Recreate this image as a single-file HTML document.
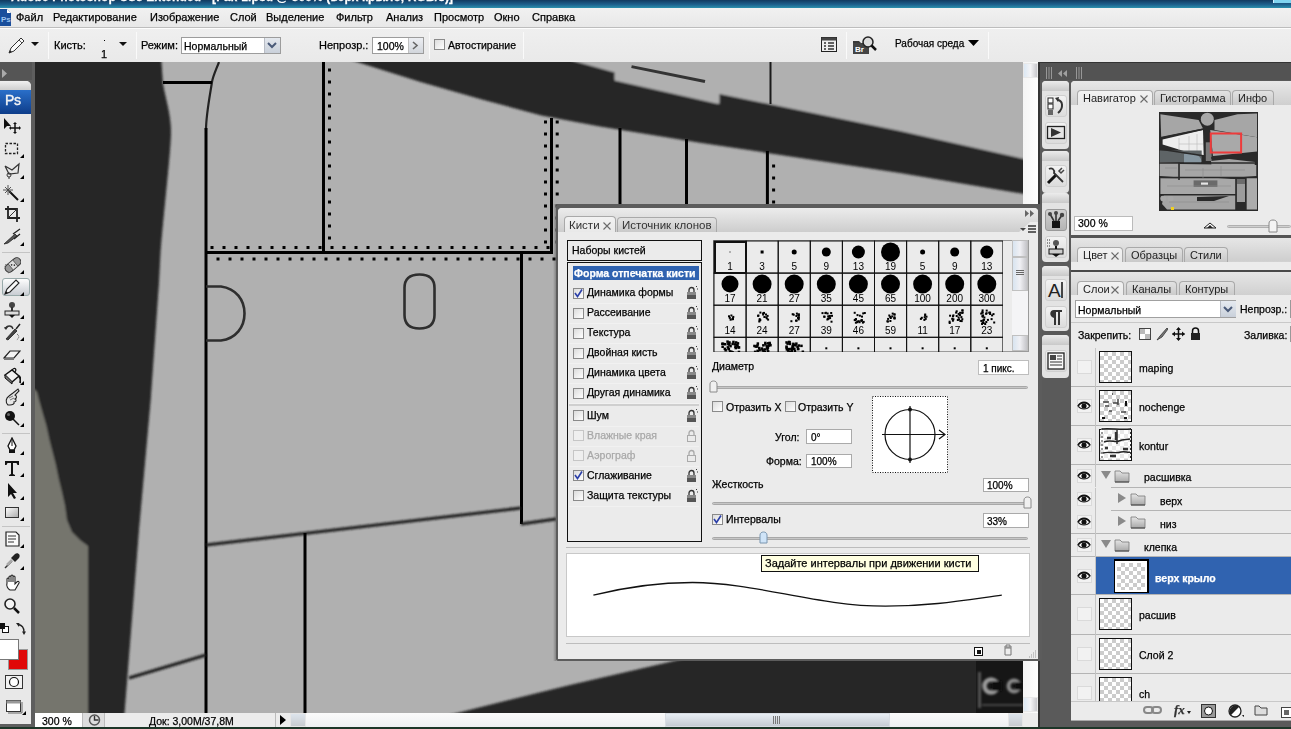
<!DOCTYPE html>
<html><head><meta charset="utf-8">
<style>
*{box-sizing:border-box;margin:0;padding:0}
html,body{width:1291px;height:729px;overflow:hidden;background:#5b5b5b;font-family:"Liberation Sans",sans-serif;font-size:11px;color:#000}
.a{position:absolute}
.t{position:absolute;white-space:nowrap;line-height:1;will-change:transform;-webkit-text-stroke:0.25px currentColor}
.cb{position:absolute;width:11px;height:11px;border:1px solid #8a8a8a;background:linear-gradient(135deg,#dcdcdc,#fff)}
.inp{position:absolute;background:#fff;border:1px solid #a8a8a8}
.tab{position:absolute;border:1px solid #a9a9a9;border-bottom:none;border-radius:4px 4px 0 0;background:linear-gradient(#e2e2e2,#c9c9c9)}
.tab.on{background:linear-gradient(#f2f2f2,#e9e9e9)}
</style></head><body>
<div class="a" style="left:0;top:0;width:1291px;height:729px;overflow:hidden">
<div class="a" style="left:0px;top:0px;width:1291px;height:8px;background:linear-gradient(#113a60,#1c5f8c 55%,#2b90ad)"></div>
<div class="t" style="left:11px;top:-9.2px;font-size:12px;font-weight:bold;color:#fff;letter-spacing:0.1px">Adobe Photoshop CS3 Extended - [Fak-1.psd @ 300% (верх крыло, RGB/8)]</div>
<div class="a" style="left:1273px;top:0px;width:18px;height:3px;background:#7fd4f0;border-left:1px solid #cfefff"></div>
<div class="a" style="left:0px;top:8px;width:1291px;height:20px;background:linear-gradient(#f1f1f1,#e8e8e8);border-bottom:1px solid #bdbdbd"></div>
<svg class="a" style="left:0px;top:9px;" width="11" height="17" viewBox="0 0 11 17"><path d="M0,0h7l4,4v13h-11z" fill="#1a4f9c"/><path d="M7,0v4h4z" fill="#fff"/><text x="1" y="13" font-size="8" font-weight="bold" fill="#9cc3f0" font-family="Liberation Sans">Ps</text></svg>
<div class="t" style="left:15.5px;top:12px;font-size:11px;">Файл</div>
<div class="t" style="left:53px;top:12px;font-size:11px;">Редактирование</div>
<div class="t" style="left:150px;top:12px;font-size:11px;">Изображение</div>
<div class="t" style="left:230px;top:12px;font-size:11px;">Слой</div>
<div class="t" style="left:266px;top:12px;font-size:11px;">Выделение</div>
<div class="t" style="left:336px;top:12px;font-size:11px;">Фильтр</div>
<div class="t" style="left:386px;top:12px;font-size:11px;">Анализ</div>
<div class="t" style="left:434px;top:12px;font-size:11px;">Просмотр</div>
<div class="t" style="left:494px;top:12px;font-size:11px;">Окно</div>
<div class="t" style="left:532px;top:12px;font-size:11px;">Справка</div>
<div class="a" style="left:0px;top:28px;width:1291px;height:34px;background:linear-gradient(#efefef,#e9e9e9);border-top:1px solid #fdfdfd"></div>
<div class="a" style="left:48px;top:32px;width:1px;height:27px;background:#929292;border-right:1px solid #fafafa"></div>
<div class="a" style="left:136px;top:32px;width:1px;height:27px;background:#929292;border-right:1px solid #fafafa"></div>
<div class="a" style="left:429px;top:32px;width:1px;height:27px;background:#929292;border-right:1px solid #fafafa"></div>
<div class="a" style="left:523px;top:32px;width:1px;height:27px;background:#929292;border-right:1px solid #fafafa"></div>
<div class="a" style="left:846px;top:32px;width:1px;height:27px;background:#929292;border-right:1px solid #fafafa"></div>
<div class="a" style="left:988px;top:32px;width:1px;height:27px;background:#929292;border-right:1px solid #fafafa"></div>
<svg class="a" style="left:7px;top:37px;" width="18" height="18" viewBox="0 0 18 18"><path d="M2,16 L4,11 L14,1 L17,4 L7,14 Z" fill="#fafafa" stroke="#333" stroke-width="1"/><path d="M2,16 L3,13 L5,15 Z" fill="#222"/><path d="M12,3 L15,6" stroke="#555"/></svg>
<svg class="a" style="left:31px;top:42px;" width="9" height="5" viewBox="0 0 9 5"><path d="M0,0h8l-4,4z" fill="#111"/></svg>
<div class="t" style="left:54px;top:40px;font-size:11px;">Кисть:</div>
<div class="a" style="left:104px;top:40px;width:1px;height:1px;background:#000"></div>
<div class="t" style="left:101px;top:49px;font-size:11px;">1</div>
<svg class="a" style="left:119px;top:42px;" width="9" height="5" viewBox="0 0 9 5"><path d="M0,0h8l-4,4z" fill="#111"/></svg>
<div class="t" style="left:141px;top:40px;font-size:11px;">Режим:</div>
<div class="inp" style="left:181px;top:37px;width:100px;height:17px;border-color:#9c9c9c"></div>
<div class="t" style="left:184px;top:41px;font-size:10.5px;">Нормальный</div>
<div class="a" style="left:264px;top:38px;width:16px;height:15px;background:linear-gradient(#e4e8ee,#c9d0da);border-left:1px solid #b8bcc4"></div>
<svg class="a" style="left:267px;top:42px;" width="10" height="7" viewBox="0 0 10 7"><path d="M1,1 L5,5 L9,1" fill="none" stroke="#4a5a78" stroke-width="2"/></svg>
<div class="t" style="left:319px;top:40px;font-size:11px;">Непрозр.:</div>
<div class="inp" style="left:372px;top:37px;width:52px;height:17px;border-color:#9c9c9c"></div>
<div class="t" style="left:377px;top:41px;font-size:10.5px;">100%</div>
<div class="a" style="left:408px;top:38px;width:15px;height:15px;background:linear-gradient(#eceef2,#d2d6dc);border-left:1px solid #c0c0c0"></div>
<svg class="a" style="left:412px;top:41px;" width="7" height="9" viewBox="0 0 7 9"><path d="M1,1 L5,4.5 L1,8" fill="none" stroke="#666" stroke-width="1.6"/></svg>
<div class="cb" style="left:434px;top:39px"></div>
<div class="t" style="left:447.5px;top:40px;font-size:10.5px;">Автостирание</div>
<svg class="a" style="left:821px;top:37px;" width="16" height="15" viewBox="0 0 16 15"><rect x="0.5" y="0.5" width="15" height="14" fill="#eee" stroke="#222"/><rect x="0.5" y="0.5" width="15" height="3" fill="#444"/><path d="M3,6h2M7,6h6M3,9h2M7,9h6M3,12h2M7,12h6" stroke="#333" stroke-width="1.3"/></svg>
<svg class="a" style="left:853px;top:36px;" width="24" height="18" viewBox="0 0 24 18"><path d="M0,5h6l2,2h8v11h-16z" fill="#3a3a3a"/><rect x="0" y="7" width="16" height="11" fill="#444"/><text x="2" y="16" font-size="8" font-weight="bold" fill="#fff" font-family="Liberation Sans">Br</text><circle cx="15" cy="6" r="5" fill="#ddd" stroke="#222" stroke-width="1.5"/><path d="M18.5,9.5 L23,14" stroke="#111" stroke-width="2.5"/></svg>
<div class="t" style="left:895px;top:39px;font-size:10px;">Рабочая среда</div>
<svg class="a" style="left:968px;top:40px;" width="11" height="7" viewBox="0 0 11 7"><path d="M0,0h11l-5.5,6z" fill="#000"/></svg>
<div class="a" style="left:0px;top:62px;width:35px;height:667px;background:#5e5e5e"></div>
<div class="a" style="left:0px;top:62px;width:32px;height:18px;background:#555"></div>
<svg class="a" style="left:2px;top:69px;" width="6" height="9" viewBox="0 0 6 9"><path d="M0,0 L5,4.5 L0,9z" fill="#aaa"/></svg>
<div class="a" style="left:0px;top:81px;width:31px;height:643px;background:#e8e8e8;border-radius:0 5px 0 0"></div>
<div class="a" style="left:0px;top:81px;width:31px;height:9px;background:linear-gradient(#f0f0f0,#cfcfcf);border-radius:0 5px 0 0"></div>
<div class="a" style="left:0px;top:90px;width:31px;height:24px;background:linear-gradient(#2a6fc9,#0e3d8a)"></div>
<div class="t" style="left:4.8px;top:93.2px;font-size:14px;color:#f4f4f4;letter-spacing:-0.3px;-webkit-text-stroke:0.4px #f4f4f4">Ps</div>
<svg class="a" style="left:3px;top:116px;" width="18" height="18" viewBox="0 0 18 18"><path d="M1,2 L1,13 L4,10 L8,10 Z" fill="#111"/><path d="M12,7v10M7,12h10" stroke="#111" stroke-width="1.5"/><path d="M12,6l-2,2h4zM12,18l-2,-2h4zM6,12l2,-2v4zM18,12l-2,-2v4z" fill="#111"/></svg>
<svg class="a" style="left:3px;top:140px;" width="18" height="18" viewBox="0 0 18 18"><rect x="2.5" y="3.5" width="12" height="10" fill="none" stroke="#222" stroke-dasharray="2.5,1.5" stroke-width="1.3"/></svg>
<svg class="a" style="left:20px;top:154px;" width="4" height="4" viewBox="0 0 4 4"><path d="M4,0v4h-4z" fill="#000"/></svg>
<svg class="a" style="left:3px;top:161px;" width="18" height="18" viewBox="0 0 18 18"><path d="M2,5 L9,9 L16,3 L15,12 L6,13 L2,5" fill="none" stroke="#333" stroke-width="1.2"/><circle cx="6" cy="14" r="2" fill="none" stroke="#333"/><path d="M6,16 v3" stroke="#333"/></svg>
<svg class="a" style="left:20px;top:175px;" width="4" height="4" viewBox="0 0 4 4"><path d="M4,0v4h-4z" fill="#000"/></svg>
<svg class="a" style="left:3px;top:184px;" width="18" height="18" viewBox="0 0 18 18"><path d="M6,7 L15,16" stroke="#111" stroke-width="2"/><path d="M5,1v10M0,6h10M2,3l6,6M8,3l-6,6" stroke="#444" stroke-width="0.9"/></svg>
<svg class="a" style="left:20px;top:198px;" width="4" height="4" viewBox="0 0 4 4"><path d="M4,0v4h-4z" fill="#000"/></svg>
<svg class="a" style="left:3px;top:205px;" width="18" height="18" viewBox="0 0 18 18"><path d="M5,1v12h12M2,4h12v13" fill="none" stroke="#222" stroke-width="1.8"/><path d="M5,13 L14,4" stroke="#333" stroke-width="1"/></svg>
<svg class="a" style="left:3px;top:228px;" width="18" height="18" viewBox="0 0 18 18"><path d="M1,16 L12,6 L14,8 L5,15 Z" fill="#555" stroke="#222" stroke-width="0.8"/><path d="M10,6 L17,1 M11,11 L17,6" stroke="#222" stroke-width="1.3"/></svg>
<svg class="a" style="left:20px;top:242px;" width="4" height="4" viewBox="0 0 4 4"><path d="M4,0v4h-4z" fill="#000"/></svg>
<div class="a" style="left:2px;top:252px;width:28px;height:1px;background:#c4c4c4"></div>
<svg class="a" style="left:3px;top:255.7px;" width="18" height="18" viewBox="0 0 18 18"><g transform="rotate(-40 10 9)"><rect x="1" y="5" width="18" height="8" rx="4" fill="#999" stroke="#333" stroke-width="1"/><rect x="7" y="5" width="6" height="8" fill="#ddd" stroke="#333" stroke-width="0.6"/><circle cx="9" cy="8" r="0.8" fill="#333"/><circle cx="11" cy="10" r="0.8" fill="#333"/></g><path d="M3,8 A6,6 0 0 0 6,17" fill="none" stroke="#555" stroke-dasharray="1,1"/></svg>
<svg class="a" style="left:20px;top:269.7px;" width="4" height="4" viewBox="0 0 4 4"><path d="M4,0v4h-4z" fill="#000"/></svg>
<div class="a" style="left:2px;top:278px;width:28px;height:18px;background:linear-gradient(#fdfdfd,#c9cdd3);border:1px solid #9aa;border-radius:3px"></div>
<svg class="a" style="left:3px;top:278px;" width="18" height="18" viewBox="0 0 18 18"><path d="M2,16 L4,11 L13,2 L16,5 L7,14 Z" fill="#fafafa" stroke="#222" stroke-width="1.1"/><path d="M2,16 L3,13 L5,15Z" fill="#111"/></svg>
<svg class="a" style="left:20px;top:292px;" width="4" height="4" viewBox="0 0 4 4"><path d="M4,0v4h-4z" fill="#000"/></svg>
<svg class="a" style="left:3px;top:301px;" width="18" height="18" viewBox="0 0 18 18"><circle cx="9" cy="4" r="3" fill="#444"/><rect x="8" y="6" width="2" height="5" fill="#333"/><rect x="2" y="10" width="14" height="4" fill="#ddd" stroke="#222"/><path d="M6,14 L9,17 L12,14Z" fill="#111"/></svg>
<svg class="a" style="left:20px;top:315px;" width="4" height="4" viewBox="0 0 4 4"><path d="M4,0v4h-4z" fill="#000"/></svg>
<svg class="a" style="left:3px;top:323px;" width="18" height="18" viewBox="0 0 18 18"><path d="M3,16 L12,6 L14,8 L5,17 Z" fill="#444" stroke="#222" stroke-width="0.8"/><path d="M13,6 L17,1" stroke="#222" stroke-width="1.5"/><path d="M2,6 C4,2 9,2 10,6" fill="none" stroke="#333" stroke-width="1.3"/><path d="M1,4 L3,7 L5,4z" fill="#333"/><path d="M14,11 C17,13 16,16 13,17" fill="none" stroke="#555" stroke-dasharray="1,1"/></svg>
<svg class="a" style="left:20px;top:337px;" width="4" height="4" viewBox="0 0 4 4"><path d="M4,0v4h-4z" fill="#000"/></svg>
<svg class="a" style="left:3px;top:345px;" width="18" height="18" viewBox="0 0 18 18"><path d="M1,13 L7,6 L17,6 L11,13 Z" fill="#f4f4f4" stroke="#222" stroke-width="1.2"/><path d="M1,13 L11,13 L11,15 L1,15Z" fill="#777"/></svg>
<svg class="a" style="left:20px;top:359px;" width="4" height="4" viewBox="0 0 4 4"><path d="M4,0v4h-4z" fill="#000"/></svg>
<svg class="a" style="left:3px;top:367px;" width="18" height="18" viewBox="0 0 18 18"><path d="M2,8 L9,3 L16,9 L9,15 Z" fill="#f2f2f2" stroke="#111" stroke-width="1.5"/><path d="M2,8 L2,11 L9,17 L9,15" fill="#777" stroke="#111" stroke-width="1"/><path d="M9,3 C12,0 14,2 12,5" fill="none" stroke="#111" stroke-width="1.2"/><path d="M16,9 C18,12 18,14 17,16" stroke="#111" stroke-width="2.2" fill="none"/></svg>
<svg class="a" style="left:20px;top:381px;" width="4" height="4" viewBox="0 0 4 4"><path d="M4,0v4h-4z" fill="#000"/></svg>
<svg class="a" style="left:3px;top:388px;" width="18" height="18" viewBox="0 0 18 18"><path d="M5,17 C2,14 3,10 6,8 L10,5 L15,1 L16,3 L12,7 C14,8 14,10 12,11 C14,12 13,14 11,14 C12,16 9,17 7,17 Z" fill="#e6e6e6" stroke="#222" stroke-width="1.1"/><path d="M6,10 L10,8 M7,12 L11,10" stroke="#555" stroke-width="0.8"/></svg>
<svg class="a" style="left:20px;top:402px;" width="4" height="4" viewBox="0 0 4 4"><path d="M4,0v4h-4z" fill="#000"/></svg>
<svg class="a" style="left:3px;top:409px;" width="18" height="18" viewBox="0 0 18 18"><circle cx="7" cy="7" r="5" fill="#111"/><circle cx="5.5" cy="5.5" r="1.5" fill="#666"/><path d="M10,10 L16,16" stroke="#111" stroke-width="1.5"/></svg>
<svg class="a" style="left:20px;top:423px;" width="4" height="4" viewBox="0 0 4 4"><path d="M4,0v4h-4z" fill="#000"/></svg>
<div class="a" style="left:2px;top:433px;width:28px;height:1px;background:#c4c4c4"></div>
<svg class="a" style="left:3px;top:437.4px;" width="18" height="18" viewBox="0 0 18 18"><path d="M9,1 L5,9 L7,13 L11,13 L13,9 Z" fill="#fff" stroke="#111" stroke-width="1.3"/><path d="M9,3v6" stroke="#111"/><rect x="6" y="13" width="6" height="3" fill="#111"/></svg>
<svg class="a" style="left:20px;top:451.4px;" width="4" height="4" viewBox="0 0 4 4"><path d="M4,0v4h-4z" fill="#000"/></svg>
<svg class="a" style="left:3px;top:459px;" width="18" height="18" viewBox="0 0 18 18"><path d="M2,2h14v4h-1.5l-1-2h-3.5v11l2,1v1h-6v-1l2,-1v-11h-3.5l-1,2h-1.5z" fill="#111"/></svg>
<svg class="a" style="left:20px;top:473px;" width="4" height="4" viewBox="0 0 4 4"><path d="M4,0v4h-4z" fill="#000"/></svg>
<svg class="a" style="left:3px;top:481.7px;" width="18" height="18" viewBox="0 0 18 18"><path d="M5,1 L5,15 L8,12 L11,17 L13,16 L10,11 L14,11 Z" fill="#111"/></svg>
<svg class="a" style="left:20px;top:495.7px;" width="4" height="4" viewBox="0 0 4 4"><path d="M4,0v4h-4z" fill="#000"/></svg>
<svg class="a" style="left:3px;top:503px;" width="18" height="18" viewBox="0 0 18 18"><rect x="2.5" y="4.5" width="13" height="10" fill="url(#g1)" stroke="#333"/><defs><linearGradient id="g1" x1="0" y1="0" x2="1" y2="1"><stop offset="0" stop-color="#fff"/><stop offset="1" stop-color="#aaa"/></linearGradient></defs></svg>
<svg class="a" style="left:20px;top:517px;" width="4" height="4" viewBox="0 0 4 4"><path d="M4,0v4h-4z" fill="#000"/></svg>
<div class="a" style="left:2px;top:526px;width:28px;height:1px;background:#c4c4c4"></div>
<svg class="a" style="left:3px;top:529.7px;" width="18" height="18" viewBox="0 0 18 18"><path d="M3,2h10l3,3v11h-13z" fill="#fafafa" stroke="#222" stroke-width="1.2"/><path d="M5,6h8M5,9h8M5,12h6" stroke="#333"/></svg>
<svg class="a" style="left:20px;top:543.7px;" width="4" height="4" viewBox="0 0 4 4"><path d="M4,0v4h-4z" fill="#000"/></svg>
<svg class="a" style="left:3px;top:552.3px;" width="18" height="18" viewBox="0 0 18 18"><path d="M2,16 L9,9" stroke="#333" stroke-width="1.5"/><path d="M8,6 L12,10 L16,6 C18,3 15,0 12,2 Z" fill="#222"/><path d="M4,13 L9,8" stroke="#aaa" stroke-width="2.5"/></svg>
<svg class="a" style="left:20px;top:566.3px;" width="4" height="4" viewBox="0 0 4 4"><path d="M4,0v4h-4z" fill="#000"/></svg>
<svg class="a" style="left:3px;top:574px;" width="18" height="18" viewBox="0 0 18 18"><path d="M4,9 V5 a1,1 0 0 1 2,0 V8 V3 a1,1 0 0 1 2,0 V8 V2 a1,1 0 0 1 2,0 V8 V3 a1,1 0 0 1 2,0 V10 L14,8 a1,1 0 0 1 2,1 L12,16 H7 C5,15 3,12 4,9Z" fill="#fff" stroke="#222" stroke-width="1.1"/></svg>
<svg class="a" style="left:3px;top:596.6px;" width="18" height="18" viewBox="0 0 18 18"><circle cx="7" cy="7" r="5" fill="#f4f4f4" stroke="#222" stroke-width="1.6"/><path d="M11,11 L16,16" stroke="#111" stroke-width="2.5"/></svg>
<svg class="a" style="left:0px;top:623px;" width="28" height="13" viewBox="0 0 28 13"><rect x="2.5" y="3.5" width="6" height="6" fill="#fff" stroke="#111"/><rect x="-1" y="0" width="6" height="6" fill="#111"/><path d="M18,1.5 C22,2 24,5 24,9" fill="none" stroke="#222" stroke-width="1.3"/><path d="M16,0 L19.5,-1 L19,4Z M24,12 L22,8.5 L26,8.5Z" fill="#222"/></svg>
<div class="a" style="left:8px;top:649px;width:20px;height:21px;background:#e00808;border:1px solid #999"></div>
<div class="a" style="left:0px;top:639px;width:19px;height:21px;background:#fff;border:1px solid #777;border-left:none"></div>
<svg class="a" style="left:5px;top:675px;" width="18" height="14" viewBox="0 0 18 14"><rect x="0.5" y="0.5" width="17" height="13" fill="#f2f2f2" stroke="#333"/><circle cx="9" cy="7" r="4.5" fill="#fff" stroke="#111" stroke-width="1.2"/></svg>
<svg class="a" style="left:5px;top:699px;" width="18" height="16" viewBox="0 0 18 16"><rect x="1.5" y="1.5" width="14" height="11" fill="#fff" stroke="#333"/><rect x="1.5" y="1.5" width="14" height="3" fill="#999"/><path d="M3,14h14v-11" stroke="#666" fill="none"/></svg>
<svg class="a" style="left:22px;top:711px;" width="4" height="4" viewBox="0 0 4 4"><path d="M4,0v4h-4z" fill="#000"/></svg>
<svg class="a" style="left:35px;top:62px" width="988" height="651" viewBox="35 62 988 651"><rect x="35" y="62" width="988" height="651" fill="#b0b0b0"/>
<defs><filter id="cb" x="-5%" y="-5%" width="110%" height="110%"><feGaussianBlur stdDeviation="1"/></filter></defs><g filter="url(#cb)">
<path d="M28,55 L161,55 L161.5,62 L163,84 C166,100 171,115 171,131 C171,150 166,190 160.6,251 L159,283 L150.7,400 L139,530 L124,720 L28,720 Z" fill="#262626"/>
<polygon points="28,385 35,390 37,392 39,400 43,414 46.5,426 49.5,440 52.6,452 55.7,464 58.8,479 62,492 65,505.5 67,520 72,532 80,540 88,546 88,720 28,720" fill="#74746d"/>
<polygon points="334.8,55 1030,55 1030,194.9 900,173 700,142.7 600,126.5 541.4,115.4 481,99.3 420.6,82.1" fill="#262626"/>
<polygon points="552,55 577,62 613,72 614.5,72 614.5,80.5 717,103.8 719.5,103.8 719.5,94 900,131 1023,158.7 1030,160.2 1030,55" fill="#b0b0b0"/>
</g>
<line x1="631.5" y1="66.6" x2="705" y2="81.5" stroke="#333" stroke-width="3"/>
<line x1="770.5" y1="62" x2="770.5" y2="104" stroke="#1a1a1a" stroke-width="2"/>
<path d="M219,62 C216,70 213,76 212,82 C210,95 206,115 206,130" fill="none" stroke="#222" stroke-width="2.2"/>
<line x1="163" y1="82.5" x2="212" y2="82.5" stroke="#000" stroke-width="3"/>
<line x1="206" y1="128" x2="206" y2="713" stroke="#000" stroke-width="3"/>
<line x1="323.5" y1="62" x2="323.5" y2="253" stroke="#000" stroke-width="3"/>
<line x1="206" y1="252.5" x2="553" y2="252.5" stroke="#000" stroke-width="3"/>
<line x1="551.5" y1="118" x2="551.5" y2="254" stroke="#000" stroke-width="3"/>
<path d="M328.0,68.5h3v3h-3zM328.0,80.5h3v3h-3zM328.0,92.5h3v3h-3zM328.0,104.5h3v3h-3zM328.0,116.5h3v3h-3zM328.0,128.5h3v3h-3zM328.0,140.5h3v3h-3zM328.0,152.5h3v3h-3zM328.0,164.5h3v3h-3zM328.0,176.5h3v3h-3zM328.0,188.5h3v3h-3zM328.0,200.5h3v3h-3zM328.0,212.5h3v3h-3zM328.0,224.5h3v3h-3zM328.0,236.5h3v3h-3zM210.5,246.0h3v3h-3zM222.5,246.0h3v3h-3zM234.5,246.0h3v3h-3zM246.5,246.0h3v3h-3zM258.5,246.0h3v3h-3zM270.5,246.0h3v3h-3zM282.5,246.0h3v3h-3zM294.5,246.0h3v3h-3zM306.5,246.0h3v3h-3zM318.5,246.0h3v3h-3zM330.5,246.0h3v3h-3zM342.5,246.0h3v3h-3zM354.5,246.0h3v3h-3zM366.5,246.0h3v3h-3zM378.5,246.0h3v3h-3zM390.5,246.0h3v3h-3zM402.5,246.0h3v3h-3zM414.5,246.0h3v3h-3zM426.5,246.0h3v3h-3zM438.5,246.0h3v3h-3zM450.5,246.0h3v3h-3zM462.5,246.0h3v3h-3zM474.5,246.0h3v3h-3zM486.5,246.0h3v3h-3zM498.5,246.0h3v3h-3zM510.5,246.0h3v3h-3zM522.5,246.0h3v3h-3zM534.5,246.0h3v3h-3zM546.5,246.0h3v3h-3zM216.5,257.5h3v3h-3zM228.5,257.5h3v3h-3zM240.5,257.5h3v3h-3zM252.5,257.5h3v3h-3zM264.5,257.5h3v3h-3zM276.5,257.5h3v3h-3zM288.5,257.5h3v3h-3zM300.5,257.5h3v3h-3zM312.5,257.5h3v3h-3zM324.5,257.5h3v3h-3zM336.5,257.5h3v3h-3zM348.5,257.5h3v3h-3zM360.5,257.5h3v3h-3zM372.5,257.5h3v3h-3zM384.5,257.5h3v3h-3zM396.5,257.5h3v3h-3zM408.5,257.5h3v3h-3zM420.5,257.5h3v3h-3zM432.5,257.5h3v3h-3zM444.5,257.5h3v3h-3zM456.5,257.5h3v3h-3zM468.5,257.5h3v3h-3zM480.5,257.5h3v3h-3zM492.5,257.5h3v3h-3zM504.5,257.5h3v3h-3zM516.5,257.5h3v3h-3zM528.5,257.5h3v3h-3zM540.5,257.5h3v3h-3zM552.5,257.5h3v3h-3zM544.0,120.5h3v3h-3zM555.7,120.5h3v3h-3zM544.0,132.5h3v3h-3zM555.7,132.5h3v3h-3zM544.0,144.5h3v3h-3zM555.7,144.5h3v3h-3zM544.0,156.5h3v3h-3zM555.7,156.5h3v3h-3zM544.0,168.5h3v3h-3zM555.7,168.5h3v3h-3zM544.0,180.5h3v3h-3zM555.7,180.5h3v3h-3zM544.0,192.5h3v3h-3zM555.7,192.5h3v3h-3zM544.0,204.5h3v3h-3zM555.7,204.5h3v3h-3zM544.0,216.5h3v3h-3zM555.7,216.5h3v3h-3zM544.0,228.5h3v3h-3zM555.7,228.5h3v3h-3zM544.0,240.5h3v3h-3zM555.7,240.5h3v3h-3zM772.1,164.5h3v3h-3zM772.1,176.5h3v3h-3zM772.1,188.5h3v3h-3zM772.1,200.5h3v3h-3z" fill="#000"/>
<line x1="620" y1="128" x2="620" y2="206" stroke="#000" stroke-width="3"/>
<line x1="686.5" y1="139" x2="686.5" y2="206" stroke="#000" stroke-width="3"/>
<line x1="767.4" y1="151" x2="767.4" y2="206" stroke="#000" stroke-width="3"/>
<path d="M206,286.5 L221,286.5 C236,288.5 244.5,300 244.5,313.5 C244.5,327 236,338.5 221,340.5 L206,340.5" fill="none" stroke="#2e2e2e" stroke-width="2.6"/>
<path d="M404.5,288 C404.5,279 410,274.5 419.5,274.5 C429,274.5 434.5,279 434.5,288 L434.5,315 C434.5,324 429,328.5 419.5,328.5 C410,328.5 404.5,324 404.5,315 Z" fill="none" stroke="#2e2e2e" stroke-width="2.6"/>
<line x1="521.5" y1="254" x2="521.5" y2="524" stroke="#000" stroke-width="3"/>
<g filter="url(#cb)">
<line x1="206" y1="545" x2="521" y2="508" stroke="#1a1a1a" stroke-width="3"/>
<line x1="521" y1="524" x2="556" y2="519" stroke="#1a1a1a" stroke-width="3"/>
<line x1="129" y1="678" x2="206" y2="655" stroke="#1a1a1a" stroke-width="3"/>
<polygon points="428,720 457,713 570,685 700,655 1030,588 1030,720" fill="#262626"/>
</g>
<line x1="305" y1="533" x2="305" y2="713" stroke="#000" stroke-width="3"/></svg>
<svg class="a" style="left:976px;top:660px;" width="47" height="53" viewBox="0 0 47 53"><defs><filter id="bl"><feGaussianBlur stdDeviation="0.9"/></filter></defs><rect x="0" y="0" width="47" height="53" fill="#161616"/><g filter="url(#bl)"><rect x="2" y="12" width="3" height="36" fill="#555"/><circle cx="15" cy="26" r="6.5" fill="none" stroke="#9a9a9a" stroke-width="4.5"/><rect x="16" y="21" width="10" height="10" fill="#111"/><circle cx="38" cy="26" r="5.5" fill="none" stroke="#8a8a8a" stroke-width="4"/><rect x="39" y="22" width="8" height="8" fill="#111"/><rect x="6" y="44" width="41" height="2" fill="#444"/></g></svg>
<div class="a" style="left:1023px;top:62px;width:15px;height:651px;background:linear-gradient(90deg,#f4f4f4,#fdfdfd)"></div>
<div class="a" style="left:1023px;top:63px;width:15px;height:15px;background:linear-gradient(90deg,#dce8f4,#f4f4f6 50%,#c8c8cc);border:1px solid #e8e8e8"></div>
<div class="a" style="left:1023px;top:697px;width:15px;height:15px;background:linear-gradient(90deg,#dce8f4,#f4f4f6 50%,#c8c8cc);border:1px solid #e8e8e8"></div>
<div class="a" style="left:35px;top:713px;width:1003px;height:14px;background:#ececec"></div>
<div class="a" style="left:35px;top:713px;width:48px;height:14px;background:#fff;border-right:1px solid #bbb"></div>
<div class="t" style="left:41.5px;top:716px;font-size:10.5px;">300 %</div>
<div class="a" style="left:83px;top:713px;width:22px;height:14px;background:#ddd;border-right:1px solid #bbb"></div>
<svg class="a" style="left:88px;top:714px;" width="13" height="12" viewBox="0 0 13 12"><circle cx="6.5" cy="6" r="5" fill="#ddd" stroke="#555" stroke-width="1.5"/><path d="M6.5,2v4h4" stroke="#333" fill="none" stroke-width="1.4"/></svg>
<div class="a" style="left:105px;top:713px;width:171px;height:14px;background:#ececec;border-right:1px solid #bbb"></div>
<div class="t" style="left:149px;top:716px;font-size:10.5px;">Док: 3,00M/37,8M</div>
<svg class="a" style="left:279px;top:715px;" width="8" height="10" viewBox="0 0 8 10"><path d="M1,0 L7,5 L1,10z" fill="#000"/></svg>
<div class="a" style="left:290px;top:713px;width:733px;height:14px;background:linear-gradient(#fbfbfb,#eef0f2)"></div>
<div class="a" style="left:290px;top:713px;width:16px;height:14px;background:linear-gradient(#dde4ec,#c8ccd0);border:1px solid #e6e6e6"></div>
<div class="a" style="left:665px;top:713px;width:225px;height:14px;background:linear-gradient(#e8eef4,#c6ccd4);border:1px solid #d8dde3"></div>
<svg class="a" style="left:773px;top:716px;" width="7" height="8" viewBox="0 0 7 8"><path d="M0.5,0v8M2.5,0v8M4.5,0v8M6.5,0v8" stroke="#777"/></svg>
<div class="a" style="left:1008px;top:713px;width:15px;height:14px;background:linear-gradient(#dde4ec,#c8ccd0);border:1px solid #e6e6e6"></div>
<div class="a" style="left:0px;top:727px;width:1291px;height:2px;background:#1d3628"></div>
<div class="a" style="left:1038px;top:62px;width:253px;height:665px;background:#5a5a5a"></div>
<div class="a" style="left:1038px;top:62px;width:2px;height:665px;background:#333"></div>
<div class="a" style="left:1038px;top:62px;width:253px;height:1.5px;background:#333"></div>
<div class="a" style="left:1040px;top:63px;width:251px;height:17px;background:#535353"></div>
<svg class="a" style="left:1045px;top:67px;" width="8" height="12" viewBox="0 0 8 12"><path d="M1.5,0v12M4,0v12M6.5,0v12" stroke="#a8a8a8" stroke-width="0.8"/></svg>
<svg class="a" style="left:1058px;top:70px;" width="9" height="7" viewBox="0 0 9 7"><path d="M4,0 L0,3.5 L4,7z M9,0 L5,3.5 L9,7z" fill="#a0a0a0"/></svg>
<svg class="a" style="left:1075px;top:67px;" width="8" height="12" viewBox="0 0 8 12"><path d="M1.5,0v12M4,0v12M6.5,0v12" stroke="#a8a8a8" stroke-width="0.8"/></svg>
<div class="a" style="left:1042px;top:81px;width:27px;height:67.5px;background:#e3e3e3;border-radius:4px"></div>
<div class="a" style="left:1042px;top:81px;width:27px;height:10px;background:linear-gradient(#ececec,#c9c9c9);border-radius:4px 4px 0 0"></div>
<div class="a" style="left:1045px;top:95px;width:22px;height:22px;background:linear-gradient(#f2f2f2,#dcdcdc);border:1px solid #cfcfcf;border-radius:3px"></div>
<svg class="a" style="left:1046px;top:96px;" width="20" height="20" viewBox="0 0 20 20"><rect x="2" y="2" width="5" height="5" fill="#fff" stroke="#222"/><rect x="2" y="8" width="5" height="5" fill="#fff" stroke="#222"/><rect x="2" y="14" width="5" height="5" fill="#666"/><path d="M11,4 C17,4 18,12 12,17" fill="none" stroke="#333" stroke-width="2"/><path d="M9,2 L12,6 L13,1z" fill="#333"/></svg>
<div class="a" style="left:1045px;top:122px;width:22px;height:22px;background:linear-gradient(#f2f2f2,#dcdcdc);border:1px solid #cfcfcf;border-radius:3px"></div>
<svg class="a" style="left:1046px;top:123px;" width="20" height="20" viewBox="0 0 20 20"><rect x="1.5" y="3.5" width="17" height="12" fill="#e6e6e6" stroke="#222" stroke-width="1.3"/><path d="M5,5 L15,9.5 L5,14z" fill="#333"/></svg>
<div class="a" style="left:1042px;top:151px;width:27px;height:42px;background:#e3e3e3;border-radius:4px"></div>
<div class="a" style="left:1042px;top:151px;width:27px;height:10px;background:linear-gradient(#ececec,#c9c9c9);border-radius:4px 4px 0 0"></div>
<div class="a" style="left:1045px;top:165px;width:22px;height:22px;background:linear-gradient(#f2f2f2,#dcdcdc);border:1px solid #cfcfcf;border-radius:3px"></div>
<svg class="a" style="left:1046px;top:166px;" width="20" height="20" viewBox="0 0 20 20"><path d="M2,17 L10,9" stroke="#111" stroke-width="3"/><path d="M3,3 C6,1 9,4 8,7 L17,16" fill="none" stroke="#333" stroke-width="1.8"/><path d="M16,2 L13,5 L15,7 L18,4" stroke="#444" fill="none" stroke-width="1.5"/></svg>
<div class="a" style="left:1042px;top:193px;width:27px;height:69px;background:#e3e3e3;border-radius:4px"></div>
<div class="a" style="left:1042px;top:193px;width:27px;height:10px;background:linear-gradient(#ececec,#c9c9c9);border-radius:4px 4px 0 0"></div>
<div class="a" style="left:1045px;top:208.5px;width:22px;height:22px;background:linear-gradient(#d0d0d0,#b4b4b4);border:1px solid #999;border-radius:3px"></div>
<svg class="a" style="left:1046px;top:209.5px;" width="20" height="20" viewBox="0 0 20 20"><path d="M6,11h8v7h-8z" fill="#111"/><path d="M8,11 L4,4 M10,11 V3 M12,11 L16,5" stroke="#333" stroke-width="1.6"/><circle cx="4" cy="4" r="2" fill="#444"/><circle cx="10" cy="3" r="2" fill="#444"/><circle cx="16" cy="5" r="2.2" fill="#444"/></svg>
<div class="a" style="left:1045px;top:236px;width:22px;height:22px;background:linear-gradient(#f2f2f2,#dcdcdc);border:1px solid #cfcfcf;border-radius:3px"></div>
<svg class="a" style="left:1046px;top:237px;" width="20" height="20" viewBox="0 0 20 20"><rect x="3" y="12" width="14" height="5" fill="#ccc" stroke="#111"/><circle cx="10" cy="6" r="3" fill="#555"/><path d="M10,9v3" stroke="#111" stroke-width="2"/><path d="M1,3h4M1,6h3M1,9h4" stroke="#333" stroke-dasharray="1,1"/><path d="M6,17l4,3l4,-3z" fill="#111"/></svg>
<div class="a" style="left:1042px;top:266px;width:27px;height:65px;background:#e3e3e3;border-radius:4px"></div>
<div class="a" style="left:1042px;top:266px;width:27px;height:10px;background:linear-gradient(#ececec,#c9c9c9);border-radius:4px 4px 0 0"></div>
<div class="a" style="left:1045px;top:279px;width:22px;height:22px;background:linear-gradient(#f2f2f2,#dcdcdc);border:1px solid #cfcfcf;border-radius:3px"></div>
<svg class="a" style="left:1046px;top:280px;" width="20" height="20" viewBox="0 0 20 20"><text x="2" y="17" font-size="19" font-family="Liberation Sans" fill="#222">A</text><path d="M16,2v16" stroke="#111" stroke-width="1.5"/></svg>
<div class="a" style="left:1045px;top:306px;width:22px;height:22px;background:linear-gradient(#f2f2f2,#dcdcdc);border:1px solid #cfcfcf;border-radius:3px"></div>
<svg class="a" style="left:1046px;top:307px;" width="20" height="20" viewBox="0 0 20 20"><path d="M8,3h8v2h-2v13h-2v-13h-2v13h-2v-7 C3,10 3,3 8,3z" fill="#333"/></svg>
<div class="a" style="left:1042px;top:335px;width:27px;height:42.60000000000002px;background:#e3e3e3;border-radius:4px"></div>
<div class="a" style="left:1042px;top:335px;width:27px;height:10px;background:linear-gradient(#ececec,#c9c9c9);border-radius:4px 4px 0 0"></div>
<div class="a" style="left:1045px;top:350px;width:22px;height:22px;background:linear-gradient(#f2f2f2,#dcdcdc);border:1px solid #cfcfcf;border-radius:3px"></div>
<svg class="a" style="left:1046px;top:351px;" width="20" height="20" viewBox="0 0 20 20"><rect x="2" y="2" width="16" height="16" fill="#f8f8f8" stroke="#222" stroke-width="1.3"/><rect x="4" y="4" width="6" height="5" fill="#444"/><path d="M11,5h5M11,8h5M4,11h12M4,14h12" stroke="#333"/></svg>
<div class="a" style="left:1071px;top:80px;width:220px;height:647px;background:#5a5a5a"></div>
<div class="a" style="left:1071px;top:81px;width:220px;height:154px;background:#ebebeb;border-radius:4px 0 0 0"></div>
<div class="a" style="left:1071px;top:81px;width:220px;height:24px;background:linear-gradient(#e8e8e8,#cfcfcf);border-radius:4px 0 0 0"></div>
<div class="tab on" style="left:1077px;top:89.6px;width:75.59999999999991px;height:16px"></div>
<div class="t" style="left:1083px;top:92.6px;font-size:11px;color:#222;-webkit-text-stroke:0">Навигатор</div>
<svg class="a" style="left:1139.6px;top:94.6px;" width="8" height="8" viewBox="0 0 8 8"><path d="M0.5,0.5 L7.5,7.5 M7.5,0.5 L0.5,7.5" stroke="#6a6a6a" stroke-width="1.1"/></svg>
<div class="tab" style="left:1153.5px;top:89.6px;width:77.5px;height:15px"></div>
<div class="t" style="left:1159.5px;top:92.6px;font-size:11px;color:#222;-webkit-text-stroke:0">Гистограмма</div>
<div class="tab" style="left:1232px;top:89.6px;width:42px;height:15px"></div>
<div class="t" style="left:1238px;top:92.6px;font-size:11px;color:#222;-webkit-text-stroke:0">Инфо</div>
<div class="a" style="left:1071px;top:105px;width:220px;height:130px;background:#ebebeb"></div>
<svg class="a" style="left:1158.6px;top:111.6px;" width="99" height="99" viewBox="0 0 99 99"><rect width="100" height="99" fill="#2a2a2a"/>
<polygon points="1.4,2.2 39.6,7.9 44,16.6 2.2,25.2" fill="#a6a6a6"/>
<circle cx="48.3" cy="7.2" r="6.5" fill="#a8a8a8"/>
<polygon points="55.5,7.9 78.5,2.2 98,1.4 98,25.2 55.5,18" fill="#a6a6a6"/>
<polygon points="51.2,18 98,25.2 98,39.6 54,43.9" fill="#a9a9a9"/>
<polygon points="3.6,27.4 44,18 44.7,43.9 22.3,38.2 3.6,32.4" fill="#eeeeee"/>
<path d="M20,26 v12 M30,24 v16 M38,22 v20 M20,32 h24" stroke="#bbb" stroke-width="0.6"/>
<rect x="46.8" y="30.3" width="5.8" height="18.7" fill="#787878"/>
<rect x="0.7" y="38.5" width="42" height="12" fill="#5e6466"/>
<path d="M25,42 C35,40 44,44 42,51 L25,51Z" fill="#8696a0"/>
<polygon points="52,49 70,47 96,50 95,58 70,61 53,58" fill="#a2a2a2"/>
<polygon points="0.7,50 20.9,51 20.9,65.5 0.7,64" fill="#a4a4a4"/>
<polygon points="21,52 97.3,53 97.3,64 40,68.4 21,68.4" fill="#a6a6a6"/>
<polygon points="1.4,66 77,67 77,82.7 1.4,82.7" fill="#a8a8a8"/>
<rect x="34.6" y="68.4" width="23.8" height="6.5" fill="#6a6a6a"/><rect x="42" y="70.5" width="7" height="2.2" fill="#e6e6e6"/>
<rect x="87.2" y="65.5" width="10.8" height="32" fill="#acacac"/>
<rect x="77.5" y="67" width="9" height="23" fill="#9c9c9c"/><rect x="77.5" y="67" width="9" height="5" fill="#6c6c6c"/>
<polygon points="5,83 77,83 77,97.5 8,97.5 3,92" fill="#a4a4a4"/>
<circle cx="4.3" cy="86.5" r="3" fill="#a8a8a8"/><circle cx="11.5" cy="86.5" r="3" fill="#a8a8a8"/>
<polygon points="38,85 70,84 55,89 38,89" fill="#2a2a2a"/>
<rect x="12" y="95" width="3" height="3" fill="#f0d020"/>
<path d="M0,37 L46,44 M0,51 h98 M20,51 v17 M0,65.5 h98 M0,82.8 h77 M77,66 v32 M86.8,65 v33 M52,46 L98,41 M0,26 L45,17" stroke="#2a2a2a" stroke-width="1.6"/><path d="M6,56 h12 M26,58 h60 M8,74 h64 M10,90 h60 M62,54 v10 M44,56 v10" stroke="#8c8c8c" stroke-width="0.6"/><rect x="51.8" y="21.5" width="30.3" height="19" fill="none" stroke="#ee3b3b" stroke-width="2"/></svg>
<div class="inp" style="left:1073.5px;top:215.5px;width:59px;height:15px;border-color:#bbb"></div>
<div class="t" style="left:1078px;top:218px;font-size:10.5px;">300 %</div>
<svg class="a" style="left:1204px;top:222px;" width="12" height="7" viewBox="0 0 12 7"><path d="M0,6 L6,1 L12,6Z" fill="#fff" stroke="#222"/><path d="M3,6 L6,3 L9,6" fill="#222"/></svg>
<div class="a" style="left:1227px;top:225px;width:64px;height:3px;background:#cfcfcf;border:1px solid #b0b0b0;border-radius:2px"></div>
<svg class="a" style="left:1268px;top:218px;" width="10" height="15" viewBox="0 0 10 15"><path d="M1,14 V5 C1,1 9,1 9,5 V14 Z" fill="#f4f4f4" stroke="#888"/></svg>
<div class="a" style="left:1071px;top:235px;width:220px;height:3px;background:#555"></div>
<div class="a" style="left:1071px;top:238px;width:220px;height:32px;background:linear-gradient(#e6e6e6,#cfcfcf 70%,#e6e6e6)"></div>
<div class="tab on" style="left:1076.6px;top:247px;width:46.90000000000009px;height:16px"></div>
<div class="t" style="left:1082.6px;top:250px;font-size:11px;color:#222;-webkit-text-stroke:0">Цвет</div>
<svg class="a" style="left:1110.5px;top:252px;" width="8" height="8" viewBox="0 0 8 8"><path d="M0.5,0.5 L7.5,7.5 M7.5,0.5 L0.5,7.5" stroke="#6a6a6a" stroke-width="1.1"/></svg>
<div class="tab" style="left:1124.5px;top:247px;width:58.5px;height:15px"></div>
<div class="t" style="left:1130.5px;top:250px;font-size:11px;color:#222;-webkit-text-stroke:0">Образцы</div>
<div class="tab" style="left:1184px;top:247px;width:44px;height:15px"></div>
<div class="t" style="left:1190px;top:250px;font-size:11px;color:#222;-webkit-text-stroke:0">Стили</div>
<div class="a" style="left:1071px;top:262px;width:220px;height:8px;background:#ececec"></div>
<div class="a" style="left:1071px;top:270px;width:220px;height:2px;background:#4a4a4a"></div>
<div class="a" style="left:1071px;top:272px;width:220px;height:449px;background:#ebebeb"></div>
<div class="a" style="left:1071px;top:272px;width:220px;height:23px;background:linear-gradient(#e6e6e6,#d0d0d0)"></div>
<div class="tab on" style="left:1077px;top:281px;width:47.40000000000009px;height:16px"></div>
<div class="t" style="left:1083px;top:284px;font-size:11px;color:#222;-webkit-text-stroke:0">Слои</div>
<svg class="a" style="left:1111.4px;top:286px;" width="8" height="8" viewBox="0 0 8 8"><path d="M0.5,0.5 L7.5,7.5 M7.5,0.5 L0.5,7.5" stroke="#6a6a6a" stroke-width="1.1"/></svg>
<div class="tab" style="left:1125.5px;top:281px;width:51.5px;height:15px"></div>
<div class="t" style="left:1131.5px;top:284px;font-size:11px;color:#222;-webkit-text-stroke:0">Каналы</div>
<div class="tab" style="left:1179px;top:281px;width:56px;height:15px"></div>
<div class="t" style="left:1185px;top:284px;font-size:11px;color:#222;-webkit-text-stroke:0">Контуры</div>
<div class="a" style="left:1071px;top:295px;width:220px;height:27px;background:#ebebeb"></div>
<div class="inp" style="left:1075.3px;top:300.4px;width:161px;height:18px;border-color:#a0a0a0"></div>
<div class="t" style="left:1078px;top:304.5px;font-size:10.5px;">Нормальный</div>
<div class="a" style="left:1220px;top:301.4px;width:16px;height:16px;background:linear-gradient(#e6eaf0,#c9d0da);border-left:1px solid #b8bcc4"></div>
<svg class="a" style="left:1223px;top:306px;" width="10" height="7" viewBox="0 0 10 7"><path d="M1,1 L5,5 L9,1" fill="none" stroke="#4a5a78" stroke-width="2"/></svg>
<div class="t" style="left:1239.5px;top:304px;font-size:10.5px;">Непрозр.:</div>
<div class="a" style="left:1071px;top:322px;width:220px;height:1px;background:#c8c8c8"></div>
<div class="t" style="left:1078px;top:330px;font-size:10.5px;">Закрепить:</div>
<svg class="a" style="left:1139px;top:328px;" width="12" height="12" viewBox="0 0 12 12"><rect x="0.5" y="0.5" width="11" height="11" fill="#fff" stroke="#444"/><rect x="1" y="1" width="5" height="5" fill="#bbb"/><rect x="6" y="6" width="5" height="5" fill="#bbb"/></svg>
<svg class="a" style="left:1156px;top:327px;" width="12" height="14" viewBox="0 0 12 14"><path d="M1,13 L4,9 L11,1 L12,2 L6,10Z" fill="#777" stroke="#333" stroke-width="0.8"/></svg>
<svg class="a" style="left:1172px;top:327px;" width="13" height="14" viewBox="0 0 13 14"><path d="M6.5,1v12M0.5,7h12" stroke="#111" stroke-width="1.5"/><path d="M6.5,0l-2.5,3h5zM6.5,14l-2.5,-3h5zM0,7l3,-2.5v5zM13,7l-3,-2.5v5z" fill="#111"/></svg>
<svg class="a" style="left:1190px;top:327px;" width="11" height="13" viewBox="0 0 11 13"><path d="M2.5,6 V4 a3,3 0 0 1 6,0 V6" fill="none" stroke="#111" stroke-width="1.5"/><rect x="1" y="6" width="9" height="7" fill="#222"/></svg>
<div class="t" style="left:1244px;top:330px;font-size:10.5px;">Заливка:</div>
<div class="a" style="left:1290px;top:300px;width:1px;height:18px;background:#999"></div>
<div class="a" style="left:1290px;top:326px;width:1px;height:16px;background:#999"></div>
<div class="a" style="left:1071px;top:346.5px;width:220px;height:1px;background:#b4b4b4"></div>
<div class="a" style="left:1071px;top:347px;width:220px;height:354px;background:#ebebeb"></div>
<div class="a" style="left:1071px;top:386.0px;width:220px;height:1px;background:#b4b4b4"></div>
<div class="a" style="left:1095px;top:347.7px;width:1px;height:38.80000000000001px;background:#c4c4c4"></div>
<div class="a" style="left:1076.5px;top:360.1px;width:15px;height:14px;background:#f2f2f2;border:1px solid #dadada"></div>
<div class="a" style="left:1099px;top:351.2px;width:32.5px;height:32px;border:1.5px solid #111;background-color:#fff;background-image:linear-gradient(45deg,#ccc 25%,transparent 25%,transparent 75%,#ccc 75%),linear-gradient(45deg,#ccc 25%,transparent 25%,transparent 75%,#ccc 75%);background-size:8px 8px;background-position:0 0,4px 4px"></div>
<div class="t" style="left:1138.5px;top:363.1px;font-size:10.5px;">maping</div>
<div class="a" style="left:1071px;top:424.9px;width:220px;height:1px;background:#b4b4b4"></div>
<div class="a" style="left:1095px;top:386.5px;width:1px;height:38.89999999999998px;background:#c4c4c4"></div>
<div class="a" style="left:1076.5px;top:398.95px;width:15px;height:14px;background:#f2f2f2;border:1px solid #dadada"></div>
<svg class="a" style="left:1077px;top:400.95px;" width="14" height="10" viewBox="0 0 14 10"><path d="M1,5 C4,1 10,1 13,5 C10,9 4,9 1,5Z" fill="#fff" stroke="#222" stroke-width="1.2"/><circle cx="7" cy="5" r="2.6" fill="#111"/><path d="M1,5 C4,0 10,0 13,5" fill="none" stroke="#111" stroke-width="1.4"/></svg>
<div class="a" style="left:1099px;top:390.0px;width:32.5px;height:32px;border:1.5px solid #111;background-color:#fff;background-image:linear-gradient(45deg,#ccc 25%,transparent 25%,transparent 75%,#ccc 75%),linear-gradient(45deg,#ccc 25%,transparent 25%,transparent 75%,#ccc 75%);background-size:8px 8px;background-position:0 0,4px 4px"></div>
<div class="t" style="left:1138.5px;top:401.95px;font-size:10.5px;">nochenge</div>
<div class="a" style="left:1071px;top:463.9px;width:220px;height:1px;background:#b4b4b4"></div>
<div class="a" style="left:1095px;top:425.4px;width:1px;height:39.0px;background:#c4c4c4"></div>
<div class="a" style="left:1076.5px;top:437.9px;width:15px;height:14px;background:#f2f2f2;border:1px solid #dadada"></div>
<svg class="a" style="left:1077px;top:439.9px;" width="14" height="10" viewBox="0 0 14 10"><path d="M1,5 C4,1 10,1 13,5 C10,9 4,9 1,5Z" fill="#fff" stroke="#222" stroke-width="1.2"/><circle cx="7" cy="5" r="2.6" fill="#111"/><path d="M1,5 C4,0 10,0 13,5" fill="none" stroke="#111" stroke-width="1.4"/></svg>
<div class="a" style="left:1099px;top:428.9px;width:32.5px;height:32px;border:1.5px solid #111;background-color:#fff;background-image:linear-gradient(45deg,#ccc 25%,transparent 25%,transparent 75%,#ccc 75%),linear-gradient(45deg,#ccc 25%,transparent 25%,transparent 75%,#ccc 75%);background-size:8px 8px;background-position:0 0,4px 4px"></div>
<div class="t" style="left:1138.5px;top:440.9px;font-size:10.5px;">kontur</div>
<svg class="a" style="left:1101px;top:391px;" width="29" height="28" viewBox="0 0 29 28"><path d="M2,11 h6 M4,15 h4 M12,12 h5 M17,8 v6 M8,20 h3 M20,21 h5 M11,3 h1" stroke="#444" stroke-width="1.5"/><path d="M25,10 v5 M23,27 h3 M1,27 h3" stroke="#111" stroke-width="2"/></svg>
<svg class="a" style="left:1100.5px;top:427px;" width="30.5" height="32" viewBox="0 0 30.5 32"><rect x="0" y="0" width="30.5" height="32" fill="rgba(255,255,255,0.55)"/><path d="M1,2 C8,1 20,3 29,2 M16,3 v14 M3,15 C10,12 14,16 18,14 C22,12 26,13 29,12 M2,26 C8,24 14,27 20,25 C24,24 27,26 29,25" stroke="#222" stroke-width="1.4" fill="none"/><path d="M15,5 v8 M6,11 h4 M22,22 h5 M4,21 h3 M9,29 h6" stroke="#333" stroke-width="2.4"/><path d="M1,1 v30 M29.5,1 v30" stroke="#333" stroke-width="1" stroke-dasharray="2,2"/></svg>
<div class="a" style="left:1095px;top:347.7px;width:1px;height:117px;background:#c4c4c4"></div>
<div class="a" style="left:1111px;top:487.0px;width:180px;height:1px;background:#b4b4b4"></div>
<div class="a" style="left:1095px;top:464.4px;width:1px;height:23.100000000000023px;background:#c4c4c4"></div>
<div class="a" style="left:1076.5px;top:468.95px;width:15px;height:14px;background:#f2f2f2;border:1px solid #dadada"></div>
<svg class="a" style="left:1077px;top:470.95px;" width="14" height="10" viewBox="0 0 14 10"><path d="M1,5 C4,1 10,1 13,5 C10,9 4,9 1,5Z" fill="#fff" stroke="#222" stroke-width="1.2"/><circle cx="7" cy="5" r="2.6" fill="#111"/><path d="M1,5 C4,0 10,0 13,5" fill="none" stroke="#111" stroke-width="1.4"/></svg>
<svg class="a" style="left:1101px;top:470.95px;" width="10" height="9" viewBox="0 0 10 9"><path d="M0,0 h10 L5,8Z" fill="#8a8a8a"/></svg>
<svg class="a" style="left:1114px;top:468.95px;" width="16" height="14" viewBox="0 0 16 14"><defs><linearGradient id="fg" x1="0" y1="0" x2="0" y2="1"><stop offset="0" stop-color="#e6e6e6"/><stop offset="1" stop-color="#a8a8a8"/></linearGradient></defs><path d="M1,2 h5 l2,2 h7 v9 h-14z" fill="url(#fg)" stroke="#777" stroke-width="0.8"/><path d="M1,13h14" stroke="#444"/></svg>
<div class="t" style="left:1144px;top:472.45px;font-size:10.5px;">расшивка</div>
<div class="a" style="left:1111px;top:510.0px;width:180px;height:1px;background:#b4b4b4"></div>
<div class="a" style="left:1095px;top:487.5px;width:1px;height:23.0px;background:#c4c4c4"></div>
<div class="a" style="left:1076.5px;top:492.0px;width:15px;height:14px;background:#f2f2f2;border:1px solid #dadada"></div>
<svg class="a" style="left:1077px;top:494.0px;" width="14" height="10" viewBox="0 0 14 10"><path d="M1,5 C4,1 10,1 13,5 C10,9 4,9 1,5Z" fill="#fff" stroke="#222" stroke-width="1.2"/><circle cx="7" cy="5" r="2.6" fill="#111"/><path d="M1,5 C4,0 10,0 13,5" fill="none" stroke="#111" stroke-width="1.4"/></svg>
<svg class="a" style="left:1118px;top:493.0px;" width="9" height="11" viewBox="0 0 9 11"><path d="M0,0 V10 L8,5Z" fill="#8a8a8a"/></svg>
<svg class="a" style="left:1130px;top:492.0px;" width="16" height="14" viewBox="0 0 16 14"><defs><linearGradient id="fg" x1="0" y1="0" x2="0" y2="1"><stop offset="0" stop-color="#e6e6e6"/><stop offset="1" stop-color="#a8a8a8"/></linearGradient></defs><path d="M1,2 h5 l2,2 h7 v9 h-14z" fill="url(#fg)" stroke="#777" stroke-width="0.8"/><path d="M1,13h14" stroke="#444"/></svg>
<div class="t" style="left:1160px;top:495.5px;font-size:10.5px;">верх</div>
<div class="a" style="left:1071px;top:533.0px;width:220px;height:1px;background:#b4b4b4"></div>
<div class="a" style="left:1095px;top:510.5px;width:1px;height:23.0px;background:#c4c4c4"></div>
<div class="a" style="left:1076.5px;top:515.0px;width:15px;height:14px;background:#f2f2f2;border:1px solid #dadada"></div>
<svg class="a" style="left:1077px;top:517.0px;" width="14" height="10" viewBox="0 0 14 10"><path d="M1,5 C4,1 10,1 13,5 C10,9 4,9 1,5Z" fill="#fff" stroke="#222" stroke-width="1.2"/><circle cx="7" cy="5" r="2.6" fill="#111"/><path d="M1,5 C4,0 10,0 13,5" fill="none" stroke="#111" stroke-width="1.4"/></svg>
<svg class="a" style="left:1118px;top:516.0px;" width="9" height="11" viewBox="0 0 9 11"><path d="M0,0 V10 L8,5Z" fill="#8a8a8a"/></svg>
<svg class="a" style="left:1130px;top:515.0px;" width="16" height="14" viewBox="0 0 16 14"><defs><linearGradient id="fg" x1="0" y1="0" x2="0" y2="1"><stop offset="0" stop-color="#e6e6e6"/><stop offset="1" stop-color="#a8a8a8"/></linearGradient></defs><path d="M1,2 h5 l2,2 h7 v9 h-14z" fill="url(#fg)" stroke="#777" stroke-width="0.8"/><path d="M1,13h14" stroke="#444"/></svg>
<div class="t" style="left:1160px;top:518.5px;font-size:10.5px;">низ</div>
<div class="a" style="left:1071px;top:556.1px;width:220px;height:1px;background:#b4b4b4"></div>
<div class="a" style="left:1095px;top:533.5px;width:1px;height:23.100000000000023px;background:#c4c4c4"></div>
<div class="a" style="left:1076.5px;top:538.05px;width:15px;height:14px;background:#f2f2f2;border:1px solid #dadada"></div>
<svg class="a" style="left:1077px;top:540.05px;" width="14" height="10" viewBox="0 0 14 10"><path d="M1,5 C4,1 10,1 13,5 C10,9 4,9 1,5Z" fill="#fff" stroke="#222" stroke-width="1.2"/><circle cx="7" cy="5" r="2.6" fill="#111"/><path d="M1,5 C4,0 10,0 13,5" fill="none" stroke="#111" stroke-width="1.4"/></svg>
<svg class="a" style="left:1101px;top:540.05px;" width="10" height="9" viewBox="0 0 10 9"><path d="M0,0 h10 L5,8Z" fill="#8a8a8a"/></svg>
<svg class="a" style="left:1114px;top:538.05px;" width="16" height="14" viewBox="0 0 16 14"><defs><linearGradient id="fg" x1="0" y1="0" x2="0" y2="1"><stop offset="0" stop-color="#e6e6e6"/><stop offset="1" stop-color="#a8a8a8"/></linearGradient></defs><path d="M1,2 h5 l2,2 h7 v9 h-14z" fill="url(#fg)" stroke="#777" stroke-width="0.8"/><path d="M1,13h14" stroke="#444"/></svg>
<div class="t" style="left:1144px;top:541.55px;font-size:10.5px;">клепка</div>
<div class="a" style="left:1095.7px;top:556.6px;width:195.3px;height:37.8px;background:#3063b0"></div>
<div class="a" style="left:1071px;top:556.6px;width:24.7px;height:37.8px;background:#ebebeb"></div>
<div class="a" style="left:1095px;top:556.6px;width:1px;height:38px;background:#c4c4c4"></div>
<div class="a" style="left:1076.5px;top:569px;width:15px;height:14px;background:#f2f2f2;border:1px solid #dadada"></div>
<svg class="a" style="left:1077px;top:571px;" width="14" height="10" viewBox="0 0 14 10"><path d="M1,5 C4,1 10,1 13,5 C10,9 4,9 1,5Z" fill="#fff" stroke="#222" stroke-width="1.2"/><circle cx="7" cy="5" r="2.6" fill="#111"/><path d="M1,5 C4,0 10,0 13,5" fill="none" stroke="#111" stroke-width="1.4"/></svg>
<div class="a" style="left:1113.6px;top:559px;width:35px;height:34.4px;background:#000"></div>
<div class="a" style="left:1115px;top:560.5px;width:32px;height:31.3px;border:2px solid #fff;background-color:#fff;background-image:linear-gradient(45deg,#ccc 25%,transparent 25%,transparent 75%,#ccc 75%),linear-gradient(45deg,#ccc 25%,transparent 25%,transparent 75%,#ccc 75%);background-size:8px 8px;background-position:0 0,4px 4px"></div>
<div class="t" style="left:1154.9px;top:572.5px;font-size:10.5px;color:#fff;font-weight:bold">верх крыло</div>
<div class="a" style="left:1071px;top:594px;width:220px;height:1px;background:#b4b4b4"></div>
<div class="a" style="left:1071px;top:633.7px;width:220px;height:1px;background:#b4b4b4"></div>
<div class="a" style="left:1095px;top:594.5px;width:1px;height:39.700000000000045px;background:#c4c4c4"></div>
<div class="a" style="left:1076.5px;top:607.35px;width:15px;height:14px;background:#f2f2f2;border:1px solid #dadada"></div>
<div class="a" style="left:1099px;top:598.0px;width:32.5px;height:32px;border:1.5px solid #111;background-color:#fff;background-image:linear-gradient(45deg,#ccc 25%,transparent 25%,transparent 75%,#ccc 75%),linear-gradient(45deg,#ccc 25%,transparent 25%,transparent 75%,#ccc 75%);background-size:8px 8px;background-position:0 0,4px 4px"></div>
<div class="t" style="left:1138.5px;top:610.35px;font-size:10.5px;">расшив</div>
<div class="a" style="left:1071px;top:672.8px;width:220px;height:1px;background:#b4b4b4"></div>
<div class="a" style="left:1095px;top:634.2px;width:1px;height:39.09999999999991px;background:#c4c4c4"></div>
<div class="a" style="left:1076.5px;top:646.75px;width:15px;height:14px;background:#f2f2f2;border:1px solid #dadada"></div>
<div class="a" style="left:1099px;top:637.7px;width:32.5px;height:32px;border:1.5px solid #111;background-color:#fff;background-image:linear-gradient(45deg,#ccc 25%,transparent 25%,transparent 75%,#ccc 75%),linear-gradient(45deg,#ccc 25%,transparent 25%,transparent 75%,#ccc 75%);background-size:8px 8px;background-position:0 0,4px 4px"></div>
<div class="t" style="left:1138.5px;top:649.75px;font-size:10.5px;">Слой 2</div>
<div class="a" style="left:1071px;top:711.9px;width:220px;height:1px;background:#b4b4b4"></div>
<div class="a" style="left:1095px;top:673.3px;width:1px;height:39.10000000000002px;background:#c4c4c4"></div>
<div class="a" style="left:1076.5px;top:685.8499999999999px;width:15px;height:14px;background:#f2f2f2;border:1px solid #dadada"></div>
<div class="a" style="left:1099px;top:676.8px;width:32.5px;height:32px;border:1.5px solid #111;background-color:#fff;background-image:linear-gradient(45deg,#ccc 25%,transparent 25%,transparent 75%,#ccc 75%),linear-gradient(45deg,#ccc 25%,transparent 25%,transparent 75%,#ccc 75%);background-size:8px 8px;background-position:0 0,4px 4px"></div>
<div class="t" style="left:1138.5px;top:689.3499999999999px;font-size:10.5px;">ch</div>
<div class="a" style="left:1071px;top:701px;width:220px;height:20px;background:#ebebeb;border-top:1px solid #c8c8c8"></div>
<div class="a" style="left:1071px;top:720px;width:220px;height:1px;background:#a8a8a8"></div>
<svg class="a" style="left:1143px;top:704px;" width="20" height="12" viewBox="0 0 20 12"><rect x="1" y="3" width="9" height="6" rx="3" fill="none" stroke="#888" stroke-width="2"/><rect x="9" y="3" width="9" height="6" rx="3" fill="none" stroke="#888" stroke-width="2"/></svg>
<div class="t" style="left:1174px;top:703px;font-size:13px;font-weight:bold;color:#333;font-family:Liberation Serif"><i>fx</i></div>
<svg class="a" style="left:1187px;top:711px;" width="4" height="3" viewBox="0 0 4 3"><path d="M0,0h4l-2,3z" fill="#222"/></svg>
<svg class="a" style="left:1201px;top:704px;" width="15" height="14" viewBox="0 0 15 14"><rect x="0.5" y="0.5" width="14" height="13" fill="#999" stroke="#333"/><circle cx="7.5" cy="7" r="4" fill="#fff" stroke="#111"/></svg>
<svg class="a" style="left:1228px;top:704px;" width="16" height="14" viewBox="0 0 16 14"><circle cx="7" cy="7" r="6" fill="#fff" stroke="#222" stroke-width="1.3"/><path d="M2.8,11.2 A6,6 0 0 1 11.2,2.8Z" fill="#222"/><path d="M14,11h3l-1.5,2z" fill="#222"/></svg>
<svg class="a" style="left:1254px;top:704px;" width="14" height="12" viewBox="0 0 14 12"><path d="M1,2 h4 l2,2 h6 v7 h-12z" fill="#ddd" stroke="#444"/></svg>
<svg class="a" style="left:1281px;top:704px;" width="12" height="14" viewBox="0 0 12 14"><rect x="0.5" y="3.5" width="10" height="10" fill="#fff" stroke="#444"/><rect x="3" y="6" width="5" height="5" fill="#666"/></svg>
<div class="a" style="left:553px;top:204px;width:3px;height:457px;background:linear-gradient(90deg,rgba(0,0,0,0),rgba(0,0,0,0.25))"></div>
<div class="a" style="left:555.5px;top:204px;width:486px;height:457px;background:#5c5c5c;border-radius:2px"></div>
<div class="a" style="left:558px;top:207.5px;width:480px;height:451px;background:#ebebeb;border-radius:4px 4px 0 0"></div>
<div class="a" style="left:558px;top:207.5px;width:480px;height:24px;background:linear-gradient(#ececec,#cdcdcd);border-radius:4px 4px 0 0"></div>
<svg class="a" style="left:1018px;top:207.5px;" width="20" height="25" viewBox="0 0 20 25"><path d="M0,25 L12,14 H20 V25Z" fill="#ebebeb"/></svg>
<svg class="a" style="left:1025px;top:210px;" width="10" height="7" viewBox="0 0 10 7"><path d="M0,0 L4,3.5 L0,7z M5,0 L9,3.5 L5,7z" fill="#666"/></svg>
<svg class="a" style="left:1020px;top:225px;" width="16" height="8" viewBox="0 0 16 8"><path d="M0,3 h6 l-3,3z" fill="#444"/><path d="M8,1h8M8,4h8M8,7h8" stroke="#333" stroke-width="1.3"/></svg>
<div class="tab on" style="left:564px;top:216.4px;width:52px;height:16px"></div>
<div class="t" style="left:569px;top:220px;font-size:11.5px;color:#333;-webkit-text-stroke:0">Кисти</div>
<svg class="a" style="left:603px;top:221.5px;" width="8" height="8" viewBox="0 0 8 8"><path d="M0.5,0.5 L7.5,7.5 M7.5,0.5 L0.5,7.5" stroke="#6a6a6a" stroke-width="1.1"/></svg>
<div class="tab" style="left:616.5px;top:217px;width:100px;height:15px"></div>
<div class="t" style="left:622px;top:220px;font-size:11.5px;color:#333;-webkit-text-stroke:0">Источник клонов</div>
<div class="a" style="left:566.5px;top:240px;width:135.5px;height:21px;background:#ebebeb;border:1.5px solid #111"></div>
<div class="t" style="left:572.4px;top:244.5px;font-size:10.5px;">Наборы кистей</div>
<div class="a" style="left:566.5px;top:262px;width:135.5px;height:280px;background:#ebebeb;border:1.5px solid #111"></div>
<div class="a" style="left:572.8px;top:266.3px;width:126px;height:13.4px;background:#2f62b0"></div>
<div class="t" style="left:574px;top:267.5px;font-size:10.5px;color:#fff;font-weight:bold">Форма отпечатка кисти</div>
<div class="a" style="left:569px;top:303px;width:130px;height:1px;background:#f1f1f1"></div>
<div class="cb" style="left:573px;top:287.5px;"></div>
<svg class="a" style="left:574px;top:288.5px;" width="9" height="9" viewBox="0 0 9 9"><path d="M1,4 L3.5,7.5 L8,0.5" fill="none" stroke="#2b3fa8" stroke-width="1.6"/></svg>
<div class="t" style="left:586.7px;top:287px;font-size:10.5px;">Динамика формы</div>
<svg class="a" style="left:686px;top:286px;" width="12" height="14" viewBox="0 0 12 14"><path d="M3,6 V4 a2.5,2.5 0 0 1 5,0 V6" fill="none" stroke="#333" stroke-width="1.3"/><rect x="1" y="6" width="9" height="7" fill="#555"/><rect x="1" y="6" width="9" height="3" fill="#888"/><path d="M10,1 l1,-1 M11,3 h1" stroke="#333"/></svg>
<div class="a" style="left:569px;top:323px;width:130px;height:1px;background:#f1f1f1"></div>
<div class="cb" style="left:573px;top:307.5px;"></div>
<div class="t" style="left:586.7px;top:307px;font-size:10.5px;">Рассеивание</div>
<svg class="a" style="left:686px;top:306px;" width="12" height="14" viewBox="0 0 12 14"><path d="M3,6 V4 a2.5,2.5 0 0 1 5,0 V6" fill="none" stroke="#333" stroke-width="1.3"/><rect x="1" y="6" width="9" height="7" fill="#555"/><rect x="1" y="6" width="9" height="3" fill="#888"/><path d="M10,1 l1,-1 M11,3 h1" stroke="#333"/></svg>
<div class="a" style="left:569px;top:343px;width:130px;height:1px;background:#f1f1f1"></div>
<div class="cb" style="left:573px;top:327.5px;"></div>
<div class="t" style="left:586.7px;top:327px;font-size:10.5px;">Текстура</div>
<svg class="a" style="left:686px;top:326px;" width="12" height="14" viewBox="0 0 12 14"><path d="M3,6 V4 a2.5,2.5 0 0 1 5,0 V6" fill="none" stroke="#333" stroke-width="1.3"/><rect x="1" y="6" width="9" height="7" fill="#555"/><rect x="1" y="6" width="9" height="3" fill="#888"/><path d="M10,1 l1,-1 M11,3 h1" stroke="#333"/></svg>
<div class="a" style="left:569px;top:363px;width:130px;height:1px;background:#f1f1f1"></div>
<div class="cb" style="left:573px;top:347.5px;"></div>
<div class="t" style="left:586.7px;top:347px;font-size:10.5px;">Двойная кисть</div>
<svg class="a" style="left:686px;top:346px;" width="12" height="14" viewBox="0 0 12 14"><path d="M3,6 V4 a2.5,2.5 0 0 1 5,0 V6" fill="none" stroke="#333" stroke-width="1.3"/><rect x="1" y="6" width="9" height="7" fill="#555"/><rect x="1" y="6" width="9" height="3" fill="#888"/><path d="M10,1 l1,-1 M11,3 h1" stroke="#333"/></svg>
<div class="a" style="left:569px;top:383px;width:130px;height:1px;background:#f1f1f1"></div>
<div class="cb" style="left:573px;top:367.5px;"></div>
<div class="t" style="left:586.7px;top:367px;font-size:10.5px;">Динамика цвета</div>
<svg class="a" style="left:686px;top:366px;" width="12" height="14" viewBox="0 0 12 14"><path d="M3,6 V4 a2.5,2.5 0 0 1 5,0 V6" fill="none" stroke="#333" stroke-width="1.3"/><rect x="1" y="6" width="9" height="7" fill="#555"/><rect x="1" y="6" width="9" height="3" fill="#888"/><path d="M10,1 l1,-1 M11,3 h1" stroke="#333"/></svg>
<div class="a" style="left:569px;top:403px;width:130px;height:1px;background:#f1f1f1"></div>
<div class="cb" style="left:573px;top:387.5px;"></div>
<div class="t" style="left:586.7px;top:387px;font-size:10.5px;">Другая динамика</div>
<svg class="a" style="left:686px;top:386px;" width="12" height="14" viewBox="0 0 12 14"><path d="M3,6 V4 a2.5,2.5 0 0 1 5,0 V6" fill="none" stroke="#333" stroke-width="1.3"/><rect x="1" y="6" width="9" height="7" fill="#555"/><rect x="1" y="6" width="9" height="3" fill="#888"/><path d="M10,1 l1,-1 M11,3 h1" stroke="#333"/></svg>
<div class="a" style="left:569px;top:425.5px;width:130px;height:1px;background:#f1f1f1"></div>
<div class="cb" style="left:573px;top:410.0px;"></div>
<div class="t" style="left:586.7px;top:409.5px;font-size:10.5px;">Шум</div>
<svg class="a" style="left:686px;top:408.5px;" width="12" height="14" viewBox="0 0 12 14"><path d="M3,6 V4 a2.5,2.5 0 0 1 5,0 V6" fill="none" stroke="#333" stroke-width="1.3"/><rect x="1" y="6" width="9" height="7" fill="#555"/><rect x="1" y="6" width="9" height="3" fill="#888"/><path d="M10,1 l1,-1 M11,3 h1" stroke="#333"/></svg>
<div class="a" style="left:569px;top:445.5px;width:130px;height:1px;background:#f1f1f1"></div>
<div class="cb" style="left:573px;top:430.0px;border-color:#c6c6c6;background:#efefef"></div>
<div class="t" style="left:586.7px;top:429.5px;font-size:10.5px;color:#a8a8a8">Влажные края</div>
<svg class="a" style="left:686px;top:428.5px;" width="12" height="14" viewBox="0 0 12 14"><path d="M3,6 V4 a2.5,2.5 0 0 1 5,0 V6" fill="none" stroke="#aaa" stroke-width="1.3"/><rect x="1.5" y="6.5" width="8" height="6" fill="none" stroke="#aaa"/></svg>
<div class="a" style="left:569px;top:465.5px;width:130px;height:1px;background:#f1f1f1"></div>
<div class="cb" style="left:573px;top:450.0px;border-color:#c6c6c6;background:#efefef"></div>
<div class="t" style="left:586.7px;top:449.5px;font-size:10.5px;color:#a8a8a8">Аэрограф</div>
<svg class="a" style="left:686px;top:448.5px;" width="12" height="14" viewBox="0 0 12 14"><path d="M3,6 V4 a2.5,2.5 0 0 1 5,0 V6" fill="none" stroke="#aaa" stroke-width="1.3"/><rect x="1.5" y="6.5" width="8" height="6" fill="none" stroke="#aaa"/></svg>
<div class="a" style="left:569px;top:485.5px;width:130px;height:1px;background:#f1f1f1"></div>
<div class="cb" style="left:573px;top:470.0px;"></div>
<svg class="a" style="left:574px;top:471.0px;" width="9" height="9" viewBox="0 0 9 9"><path d="M1,4 L3.5,7.5 L8,0.5" fill="none" stroke="#2b3fa8" stroke-width="1.6"/></svg>
<div class="t" style="left:586.7px;top:469.5px;font-size:10.5px;">Сглаживание</div>
<svg class="a" style="left:686px;top:468.5px;" width="12" height="14" viewBox="0 0 12 14"><path d="M3,6 V4 a2.5,2.5 0 0 1 5,0 V6" fill="none" stroke="#333" stroke-width="1.3"/><rect x="1" y="6" width="9" height="7" fill="#555"/><rect x="1" y="6" width="9" height="3" fill="#888"/><path d="M10,1 l1,-1 M11,3 h1" stroke="#333"/></svg>
<div class="a" style="left:569px;top:505.5px;width:130px;height:1px;background:#f1f1f1"></div>
<div class="cb" style="left:573px;top:490.0px;"></div>
<div class="t" style="left:586.7px;top:489.5px;font-size:10.5px;">Защита текстуры</div>
<svg class="a" style="left:686px;top:488.5px;" width="12" height="14" viewBox="0 0 12 14"><path d="M3,6 V4 a2.5,2.5 0 0 1 5,0 V6" fill="none" stroke="#333" stroke-width="1.3"/><rect x="1" y="6" width="9" height="7" fill="#555"/><rect x="1" y="6" width="9" height="3" fill="#888"/><path d="M10,1 l1,-1 M11,3 h1" stroke="#333"/></svg>
<div class="a" style="left:569px;top:403.5px;width:130px;height:2px;background:#cfcfcf"></div>
<div class="a" style="left:712.5px;top:239.6px;width:316px;height:112px;background:#ebebeb;border:1px solid #9a9a9a"></div>
<svg class="a" style="left:712.5px;top:239.6px;will-change:transform" width="290" height="112" viewBox="0 0 290 112"><rect x="1.0" y="1.0" width="32.1" height="32.1" fill="none" stroke="#111" stroke-width="1"/><rect x="16.5" y="11.5" width="1" height="1" fill="#000"/><text x="17.0" y="30.0" text-anchor="middle" font-size="10" font-family="Liberation Sans">1</text><rect x="33.1" y="1.0" width="32.1" height="32.1" fill="none" stroke="#111" stroke-width="1"/><rect x="47.6" y="10.5" width="3" height="3" fill="#000"/><text x="49.1" y="30.0" text-anchor="middle" font-size="10" font-family="Liberation Sans">3</text><rect x="65.2" y="1.0" width="32.1" height="32.1" fill="none" stroke="#111" stroke-width="1"/><circle cx="81.2" cy="12.0" r="2.5" fill="#000"/><text x="81.2" y="30.0" text-anchor="middle" font-size="10" font-family="Liberation Sans">5</text><rect x="97.3" y="1.0" width="32.1" height="32.1" fill="none" stroke="#111" stroke-width="1"/><circle cx="113.3" cy="12.0" r="4.5" fill="#000"/><text x="113.3" y="30.0" text-anchor="middle" font-size="10" font-family="Liberation Sans">9</text><rect x="129.4" y="1.0" width="32.1" height="32.1" fill="none" stroke="#111" stroke-width="1"/><circle cx="145.4" cy="12.0" r="6.5" fill="#000"/><text x="145.4" y="30.0" text-anchor="middle" font-size="10" font-family="Liberation Sans">13</text><rect x="161.5" y="1.0" width="32.1" height="32.1" fill="none" stroke="#111" stroke-width="1"/><circle cx="177.5" cy="12.0" r="9.5" fill="#000"/><text x="177.5" y="30.0" text-anchor="middle" font-size="10" font-family="Liberation Sans">19</text><rect x="193.6" y="1.0" width="32.1" height="32.1" fill="none" stroke="#111" stroke-width="1"/><circle cx="209.6" cy="12.0" r="2.5" fill="#000"/><text x="209.6" y="30.0" text-anchor="middle" font-size="10" font-family="Liberation Sans">5</text><rect x="225.7" y="1.0" width="32.1" height="32.1" fill="none" stroke="#111" stroke-width="1"/><circle cx="241.7" cy="12.0" r="4.5" fill="#000"/><text x="241.7" y="30.0" text-anchor="middle" font-size="10" font-family="Liberation Sans">9</text><rect x="257.8" y="1.0" width="32.1" height="32.1" fill="none" stroke="#111" stroke-width="1"/><circle cx="273.8" cy="12.0" r="6.5" fill="#000"/><text x="273.8" y="30.0" text-anchor="middle" font-size="10" font-family="Liberation Sans">13</text><rect x="1.0" y="33.1" width="32.1" height="32.1" fill="none" stroke="#111" stroke-width="1"/><circle cx="17.0" cy="44.1" r="8.5" fill="#000"/><text x="17.0" y="62.1" text-anchor="middle" font-size="10" font-family="Liberation Sans">17</text><rect x="33.1" y="33.1" width="32.1" height="32.1" fill="none" stroke="#111" stroke-width="1"/><circle cx="49.1" cy="44.1" r="9.5" fill="#000"/><text x="49.1" y="62.1" text-anchor="middle" font-size="10" font-family="Liberation Sans">21</text><rect x="65.2" y="33.1" width="32.1" height="32.1" fill="none" stroke="#111" stroke-width="1"/><circle cx="81.2" cy="44.1" r="9.5" fill="#000"/><text x="81.2" y="62.1" text-anchor="middle" font-size="10" font-family="Liberation Sans">27</text><rect x="97.3" y="33.1" width="32.1" height="32.1" fill="none" stroke="#111" stroke-width="1"/><circle cx="113.3" cy="44.1" r="9.5" fill="#000"/><text x="113.3" y="62.1" text-anchor="middle" font-size="10" font-family="Liberation Sans">35</text><rect x="129.4" y="33.1" width="32.1" height="32.1" fill="none" stroke="#111" stroke-width="1"/><circle cx="145.4" cy="44.1" r="9.5" fill="#000"/><text x="145.4" y="62.1" text-anchor="middle" font-size="10" font-family="Liberation Sans">45</text><rect x="161.5" y="33.1" width="32.1" height="32.1" fill="none" stroke="#111" stroke-width="1"/><circle cx="177.5" cy="44.1" r="9.5" fill="#000"/><text x="177.5" y="62.1" text-anchor="middle" font-size="10" font-family="Liberation Sans">65</text><rect x="193.6" y="33.1" width="32.1" height="32.1" fill="none" stroke="#111" stroke-width="1"/><circle cx="209.6" cy="44.1" r="9.5" fill="#000"/><text x="209.6" y="62.1" text-anchor="middle" font-size="10" font-family="Liberation Sans">100</text><rect x="225.7" y="33.1" width="32.1" height="32.1" fill="none" stroke="#111" stroke-width="1"/><circle cx="241.7" cy="44.1" r="9.5" fill="#000"/><text x="241.7" y="62.1" text-anchor="middle" font-size="10" font-family="Liberation Sans">200</text><rect x="257.8" y="33.1" width="32.1" height="32.1" fill="none" stroke="#111" stroke-width="1"/><circle cx="273.8" cy="44.1" r="9.5" fill="#000"/><text x="273.8" y="62.1" text-anchor="middle" font-size="10" font-family="Liberation Sans">300</text><rect x="1.0" y="65.2" width="32.1" height="32.1" fill="none" stroke="#111" stroke-width="1"/><rect x="19.0" y="77.1" width="2" height="2" fill="#000"/><rect x="18.3" y="78.2" width="2" height="2" fill="#000"/><rect x="15.8" y="76.9" width="2" height="2" fill="#000"/><rect x="19.0" y="78.1" width="2" height="2" fill="#000"/><rect x="17.4" y="74.5" width="2" height="2" fill="#000"/><rect x="16.6" y="78.7" width="2" height="2" fill="#000"/><rect x="15.0" y="75.3" width="2" height="2" fill="#000"/><rect x="19.3" y="75.9" width="2" height="2" fill="#000"/><text x="17.0" y="94.2" text-anchor="middle" font-size="10" font-family="Liberation Sans">14</text><rect x="33.1" y="65.2" width="32.1" height="32.1" fill="none" stroke="#111" stroke-width="1"/><rect x="45.7" y="78.1" width="2" height="2" fill="#000"/><rect x="50.4" y="76.0" width="2" height="2" fill="#000"/><rect x="46.3" y="79.1" width="2" height="2" fill="#000"/><rect x="52.2" y="76.3" width="2" height="2" fill="#000"/><rect x="49.2" y="73.6" width="2" height="2" fill="#000"/><rect x="44.1" y="74.9" width="2" height="2" fill="#000"/><rect x="50.0" y="71.9" width="2" height="2" fill="#000"/><rect x="52.0" y="73.5" width="2" height="2" fill="#000"/><rect x="46.4" y="71.6" width="2" height="2" fill="#000"/><rect x="54.1" y="78.6" width="2" height="2" fill="#000"/><rect x="52.9" y="77.4" width="2" height="2" fill="#000"/><rect x="44.4" y="74.5" width="2" height="2" fill="#000"/><rect x="49.1" y="72.4" width="2" height="2" fill="#000"/><rect x="53.6" y="74.9" width="2" height="2" fill="#000"/><rect x="45.6" y="79.4" width="2" height="2" fill="#000"/><rect x="45.3" y="80.5" width="2" height="2" fill="#000"/><text x="49.1" y="94.2" text-anchor="middle" font-size="10" font-family="Liberation Sans">24</text><rect x="65.2" y="65.2" width="32.1" height="32.1" fill="none" stroke="#111" stroke-width="1"/><rect x="84.9" y="73.3" width="2" height="2" fill="#000"/><rect x="77.4" y="80.2" width="2" height="2" fill="#000"/><rect x="78.7" y="73.2" width="2" height="2" fill="#000"/><rect x="82.4" y="75.0" width="2" height="2" fill="#000"/><rect x="84.3" y="74.1" width="2" height="2" fill="#000"/><rect x="84.9" y="74.8" width="2" height="2" fill="#000"/><rect x="82.0" y="79.7" width="2" height="2" fill="#000"/><rect x="82.7" y="79.6" width="2" height="2" fill="#000"/><rect x="82.9" y="72.6" width="2" height="2" fill="#000"/><rect x="84.3" y="76.9" width="2" height="2" fill="#000"/><rect x="79.7" y="73.7" width="2" height="2" fill="#000"/><rect x="84.0" y="76.9" width="2" height="2" fill="#000"/><rect x="84.7" y="78.4" width="2" height="2" fill="#000"/><rect x="84.9" y="76.7" width="2" height="2" fill="#000"/><text x="81.2" y="94.2" text-anchor="middle" font-size="10" font-family="Liberation Sans">27</text><rect x="97.3" y="65.2" width="32.1" height="32.1" fill="none" stroke="#111" stroke-width="1"/><rect x="117.5" y="80.7" width="2" height="2" fill="#000"/><rect x="117.2" y="72.0" width="2" height="2" fill="#000"/><rect x="114.2" y="75.4" width="2" height="2" fill="#000"/><rect x="113.6" y="72.5" width="2" height="2" fill="#000"/><rect x="110.2" y="75.6" width="2" height="2" fill="#000"/><rect x="110.5" y="75.8" width="2" height="2" fill="#000"/><rect x="108.5" y="72.1" width="2" height="2" fill="#000"/><rect x="115.4" y="75.4" width="2" height="2" fill="#000"/><rect x="113.4" y="78.5" width="2" height="2" fill="#000"/><rect x="111.9" y="71.8" width="2" height="2" fill="#000"/><rect x="116.1" y="77.1" width="2" height="2" fill="#000"/><rect x="114.9" y="77.4" width="2" height="2" fill="#000"/><rect x="118.0" y="74.8" width="2" height="2" fill="#000"/><rect x="115.9" y="74.9" width="2" height="2" fill="#000"/><rect x="114.0" y="77.8" width="2" height="2" fill="#000"/><rect x="111.4" y="72.1" width="2" height="2" fill="#000"/><text x="113.3" y="94.2" text-anchor="middle" font-size="10" font-family="Liberation Sans">39</text><rect x="129.4" y="65.2" width="32.1" height="32.1" fill="none" stroke="#111" stroke-width="1"/><rect x="147.7" y="79.9" width="2" height="2" fill="#000"/><rect x="141.9" y="81.7" width="2" height="2" fill="#000"/><rect x="142.0" y="78.1" width="2" height="2" fill="#000"/><rect x="140.9" y="79.0" width="2" height="2" fill="#000"/><rect x="141.6" y="78.5" width="2" height="2" fill="#000"/><rect x="147.9" y="79.1" width="2" height="2" fill="#000"/><rect x="144.8" y="80.2" width="2" height="2" fill="#000"/><rect x="150.8" y="72.0" width="2" height="2" fill="#000"/><rect x="145.6" y="81.2" width="2" height="2" fill="#000"/><rect x="148.0" y="75.6" width="2" height="2" fill="#000"/><rect x="143.3" y="81.2" width="2" height="2" fill="#000"/><rect x="140.8" y="79.1" width="2" height="2" fill="#000"/><rect x="149.2" y="72.4" width="2" height="2" fill="#000"/><rect x="143.5" y="74.1" width="2" height="2" fill="#000"/><rect x="145.9" y="74.7" width="2" height="2" fill="#000"/><rect x="149.7" y="80.9" width="2" height="2" fill="#000"/><rect x="143.4" y="80.5" width="2" height="2" fill="#000"/><rect x="140.7" y="71.8" width="2" height="2" fill="#000"/><rect x="147.2" y="79.5" width="2" height="2" fill="#000"/><rect x="148.9" y="81.6" width="2" height="2" fill="#000"/><text x="145.4" y="94.2" text-anchor="middle" font-size="10" font-family="Liberation Sans">46</text><rect x="161.5" y="65.2" width="32.1" height="32.1" fill="none" stroke="#111" stroke-width="1"/><rect x="176.4" y="80.0" width="2" height="2" fill="#000"/><rect x="180.6" y="73.6" width="2" height="2" fill="#000"/><rect x="180.8" y="77.4" width="2" height="2" fill="#000"/><rect x="173.4" y="80.3" width="2" height="2" fill="#000"/><rect x="175.3" y="74.5" width="2" height="2" fill="#000"/><rect x="176.8" y="77.0" width="2" height="2" fill="#000"/><rect x="174.1" y="77.9" width="2" height="2" fill="#000"/><rect x="180.5" y="76.3" width="2" height="2" fill="#000"/><rect x="180.2" y="77.3" width="2" height="2" fill="#000"/><rect x="180.4" y="73.3" width="2" height="2" fill="#000"/><rect x="176.2" y="75.9" width="2" height="2" fill="#000"/><rect x="173.9" y="80.5" width="2" height="2" fill="#000"/><rect x="178.7" y="72.6" width="2" height="2" fill="#000"/><rect x="178.2" y="75.4" width="2" height="2" fill="#000"/><text x="177.5" y="94.2" text-anchor="middle" font-size="10" font-family="Liberation Sans">59</text><rect x="193.6" y="65.2" width="32.1" height="32.1" fill="none" stroke="#111" stroke-width="1"/><rect x="211.1" y="74.4" width="2" height="2" fill="#000"/><rect x="207.8" y="76.8" width="2" height="2" fill="#000"/><rect x="206.9" y="77.9" width="2" height="2" fill="#000"/><rect x="211.2" y="73.5" width="2" height="2" fill="#000"/><rect x="210.7" y="76.2" width="2" height="2" fill="#000"/><rect x="210.4" y="78.9" width="2" height="2" fill="#000"/><rect x="212.5" y="75.7" width="2" height="2" fill="#000"/><rect x="211.7" y="77.9" width="2" height="2" fill="#000"/><text x="209.6" y="94.2" text-anchor="middle" font-size="10" font-family="Liberation Sans">11</text><rect x="225.7" y="65.2" width="32.1" height="32.1" fill="none" stroke="#111" stroke-width="1"/><rect x="243.8" y="79.0" width="2" height="2" fill="#000"/><rect x="248.1" y="71.9" width="2" height="2" fill="#000"/><rect x="235.6" y="80.7" width="2" height="2" fill="#000"/><rect x="239.4" y="74.4" width="2" height="2" fill="#000"/><rect x="246.1" y="71.8" width="2" height="2" fill="#000"/><rect x="247.4" y="76.1" width="2" height="2" fill="#000"/><rect x="235.7" y="82.0" width="2" height="2" fill="#000"/><rect x="242.7" y="70.3" width="2" height="2" fill="#000"/><rect x="246.4" y="80.0" width="2" height="2" fill="#000"/><rect x="245.1" y="78.4" width="2" height="2" fill="#000"/><rect x="248.6" y="69.4" width="2" height="2" fill="#000"/><rect x="248.3" y="78.2" width="2" height="2" fill="#000"/><rect x="238.2" y="77.8" width="2" height="2" fill="#000"/><rect x="239.4" y="78.3" width="2" height="2" fill="#000"/><rect x="244.6" y="76.5" width="2" height="2" fill="#000"/><rect x="236.1" y="74.7" width="2" height="2" fill="#000"/><rect x="238.9" y="79.7" width="2" height="2" fill="#000"/><rect x="247.7" y="80.1" width="2" height="2" fill="#000"/><rect x="242.1" y="71.6" width="2" height="2" fill="#000"/><rect x="244.6" y="72.9" width="2" height="2" fill="#000"/><rect x="248.7" y="71.6" width="2" height="2" fill="#000"/><rect x="248.3" y="69.4" width="2" height="2" fill="#000"/><rect x="245.6" y="74.0" width="2" height="2" fill="#000"/><rect x="242.7" y="75.0" width="2" height="2" fill="#000"/><rect x="239.0" y="75.3" width="2" height="2" fill="#000"/><rect x="246.1" y="74.1" width="2" height="2" fill="#000"/><text x="241.7" y="94.2" text-anchor="middle" font-size="10" font-family="Liberation Sans">17</text><rect x="257.8" y="65.2" width="32.1" height="32.1" fill="none" stroke="#111" stroke-width="1"/><rect x="268.4" y="71.0" width="2" height="2" fill="#000"/><rect x="275.2" y="71.7" width="2" height="2" fill="#000"/><rect x="268.7" y="75.7" width="2" height="2" fill="#000"/><rect x="272.6" y="72.2" width="2" height="2" fill="#000"/><rect x="272.3" y="81.0" width="2" height="2" fill="#000"/><rect x="268.6" y="71.8" width="2" height="2" fill="#000"/><rect x="267.2" y="72.6" width="2" height="2" fill="#000"/><rect x="268.1" y="83.0" width="2" height="2" fill="#000"/><rect x="271.2" y="83.0" width="2" height="2" fill="#000"/><rect x="268.6" y="81.9" width="2" height="2" fill="#000"/><rect x="273.9" y="78.9" width="2" height="2" fill="#000"/><rect x="276.1" y="73.0" width="2" height="2" fill="#000"/><rect x="270.1" y="78.7" width="2" height="2" fill="#000"/><rect x="268.6" y="69.4" width="2" height="2" fill="#000"/><rect x="277.6" y="78.1" width="2" height="2" fill="#000"/><rect x="270.4" y="76.5" width="2" height="2" fill="#000"/><rect x="279.5" y="73.1" width="2" height="2" fill="#000"/><rect x="268.5" y="75.0" width="2" height="2" fill="#000"/><rect x="269.1" y="74.4" width="2" height="2" fill="#000"/><rect x="267.3" y="79.9" width="2" height="2" fill="#000"/><rect x="278.1" y="74.4" width="2" height="2" fill="#000"/><rect x="272.1" y="72.8" width="2" height="2" fill="#000"/><rect x="280.2" y="81.5" width="2" height="2" fill="#000"/><rect x="276.1" y="71.6" width="2" height="2" fill="#000"/><rect x="269.2" y="79.9" width="2" height="2" fill="#000"/><rect x="269.5" y="78.8" width="2" height="2" fill="#000"/><rect x="272.7" y="69.6" width="2" height="2" fill="#000"/><rect x="269.6" y="82.0" width="2" height="2" fill="#000"/><text x="273.8" y="94.2" text-anchor="middle" font-size="10" font-family="Liberation Sans">23</text><rect x="1.0" y="97.3" width="32.1" height="32.1" fill="none" stroke="#111" stroke-width="1"/><rect x="14.9" y="102.5" width="2.5" height="2.5" fill="#000"/><rect x="11.0" y="103.0" width="2.5" height="2.5" fill="#000"/><rect x="20.9" y="103.1" width="2.5" height="2.5" fill="#000"/><rect x="14.5" y="107.8" width="2.5" height="2.5" fill="#000"/><rect x="17.2" y="110.6" width="2.5" height="2.5" fill="#000"/><rect x="16.3" y="104.9" width="2.5" height="2.5" fill="#000"/><rect x="18.4" y="102.7" width="2.5" height="2.5" fill="#000"/><rect x="23.3" y="104.4" width="2.5" height="2.5" fill="#000"/><rect x="14.6" y="107.8" width="2.5" height="2.5" fill="#000"/><rect x="10.6" y="107.6" width="2.5" height="2.5" fill="#000"/><rect x="22.4" y="104.0" width="2.5" height="2.5" fill="#000"/><rect x="24.1" y="106.1" width="2.5" height="2.5" fill="#000"/><rect x="21.2" y="105.5" width="2.5" height="2.5" fill="#000"/><rect x="14.8" y="103.3" width="2.5" height="2.5" fill="#000"/><rect x="8.1" y="102.5" width="2.5" height="2.5" fill="#000"/><rect x="24.8" y="106.2" width="2.5" height="2.5" fill="#000"/><rect x="15.9" y="110.2" width="2.5" height="2.5" fill="#000"/><rect x="18.3" y="111.0" width="2.5" height="2.5" fill="#000"/><rect x="14.1" y="102.7" width="2.5" height="2.5" fill="#000"/><rect x="23.7" y="102.1" width="2.5" height="2.5" fill="#000"/><rect x="21.5" y="106.8" width="2.5" height="2.5" fill="#000"/><rect x="24.7" y="110.7" width="2.5" height="2.5" fill="#000"/><rect x="19.2" y="100.7" width="2.5" height="2.5" fill="#000"/><rect x="8.4" y="105.5" width="2.5" height="2.5" fill="#000"/><rect x="21.9" y="101.2" width="2.5" height="2.5" fill="#000"/><rect x="15.2" y="101.2" width="2.5" height="2.5" fill="#000"/><rect x="13.3" y="100.4" width="2.5" height="2.5" fill="#000"/><rect x="13.6" y="106.1" width="2.5" height="2.5" fill="#000"/><rect x="11.4" y="109.0" width="2.5" height="2.5" fill="#000"/><rect x="8.9" y="102.6" width="2.5" height="2.5" fill="#000"/><rect x="33.1" y="97.3" width="32.1" height="32.1" fill="none" stroke="#111" stroke-width="1"/><rect x="42.6" y="105.3" width="2.5" height="2.5" fill="#000"/><rect x="53.2" y="108.1" width="2.5" height="2.5" fill="#000"/><rect x="52.5" y="105.1" width="2.5" height="2.5" fill="#000"/><rect x="53.7" y="106.2" width="2.5" height="2.5" fill="#000"/><rect x="41.5" y="105.3" width="2.5" height="2.5" fill="#000"/><rect x="40.9" y="110.6" width="2.5" height="2.5" fill="#000"/><rect x="56.2" y="104.0" width="2.5" height="2.5" fill="#000"/><rect x="45.4" y="108.7" width="2.5" height="2.5" fill="#000"/><rect x="43.6" y="102.3" width="2.5" height="2.5" fill="#000"/><rect x="43.3" y="104.1" width="2.5" height="2.5" fill="#000"/><rect x="50.7" y="110.9" width="2.5" height="2.5" fill="#000"/><rect x="43.7" y="110.8" width="2.5" height="2.5" fill="#000"/><rect x="49.5" y="110.2" width="2.5" height="2.5" fill="#000"/><rect x="54.0" y="102.1" width="2.5" height="2.5" fill="#000"/><rect x="51.1" y="101.7" width="2.5" height="2.5" fill="#000"/><rect x="40.2" y="104.7" width="2.5" height="2.5" fill="#000"/><rect x="53.2" y="106.5" width="2.5" height="2.5" fill="#000"/><rect x="43.4" y="109.6" width="2.5" height="2.5" fill="#000"/><rect x="55.6" y="102.9" width="2.5" height="2.5" fill="#000"/><rect x="47.7" y="107.3" width="2.5" height="2.5" fill="#000"/><rect x="55.4" y="101.7" width="2.5" height="2.5" fill="#000"/><rect x="49.5" y="111.0" width="2.5" height="2.5" fill="#000"/><rect x="50.5" y="108.2" width="2.5" height="2.5" fill="#000"/><rect x="53.3" y="105.9" width="2.5" height="2.5" fill="#000"/><rect x="45.0" y="106.8" width="2.5" height="2.5" fill="#000"/><rect x="49.1" y="104.1" width="2.5" height="2.5" fill="#000"/><rect x="54.6" y="104.3" width="2.5" height="2.5" fill="#000"/><rect x="48.3" y="108.7" width="2.5" height="2.5" fill="#000"/><rect x="53.9" y="110.1" width="2.5" height="2.5" fill="#000"/><rect x="51.2" y="103.1" width="2.5" height="2.5" fill="#000"/><rect x="65.2" y="97.3" width="32.1" height="32.1" fill="none" stroke="#111" stroke-width="1"/><rect x="82.1" y="102.4" width="2.5" height="2.5" fill="#000"/><rect x="88.6" y="110.5" width="2.5" height="2.5" fill="#000"/><rect x="80.1" y="107.6" width="2.5" height="2.5" fill="#000"/><rect x="75.8" y="102.7" width="2.5" height="2.5" fill="#000"/><rect x="77.1" y="107.9" width="2.5" height="2.5" fill="#000"/><rect x="75.8" y="111.0" width="2.5" height="2.5" fill="#000"/><rect x="73.4" y="102.4" width="2.5" height="2.5" fill="#000"/><rect x="73.7" y="108.8" width="2.5" height="2.5" fill="#000"/><rect x="78.4" y="105.5" width="2.5" height="2.5" fill="#000"/><rect x="77.7" y="107.3" width="2.5" height="2.5" fill="#000"/><rect x="79.1" y="102.6" width="2.5" height="2.5" fill="#000"/><rect x="79.5" y="103.6" width="2.5" height="2.5" fill="#000"/><rect x="74.1" y="109.4" width="2.5" height="2.5" fill="#000"/><rect x="83.8" y="107.6" width="2.5" height="2.5" fill="#000"/><rect x="87.2" y="104.6" width="2.5" height="2.5" fill="#000"/><rect x="78.6" y="105.0" width="2.5" height="2.5" fill="#000"/><rect x="79.1" y="107.7" width="2.5" height="2.5" fill="#000"/><rect x="72.3" y="105.4" width="2.5" height="2.5" fill="#000"/><rect x="81.3" y="104.1" width="2.5" height="2.5" fill="#000"/><rect x="72.6" y="108.1" width="2.5" height="2.5" fill="#000"/><rect x="72.4" y="106.5" width="2.5" height="2.5" fill="#000"/><rect x="74.8" y="100.7" width="2.5" height="2.5" fill="#000"/><rect x="75.3" y="101.0" width="2.5" height="2.5" fill="#000"/><rect x="74.8" y="107.8" width="2.5" height="2.5" fill="#000"/><rect x="84.6" y="104.3" width="2.5" height="2.5" fill="#000"/><rect x="83.3" y="105.5" width="2.5" height="2.5" fill="#000"/><rect x="80.7" y="109.9" width="2.5" height="2.5" fill="#000"/><rect x="77.5" y="109.9" width="2.5" height="2.5" fill="#000"/><rect x="83.9" y="107.8" width="2.5" height="2.5" fill="#000"/><rect x="72.3" y="101.2" width="2.5" height="2.5" fill="#000"/><rect x="97.3" y="97.3" width="32.1" height="32.1" fill="none" stroke="#111" stroke-width="1"/><rect x="112.3" y="107.3" width="2" height="2" fill="#000"/><rect x="129.4" y="97.3" width="32.1" height="32.1" fill="none" stroke="#111" stroke-width="1"/><rect x="144.4" y="107.3" width="2" height="2" fill="#000"/><rect x="161.5" y="97.3" width="32.1" height="32.1" fill="none" stroke="#111" stroke-width="1"/><rect x="176.5" y="107.3" width="2" height="2" fill="#000"/><rect x="193.6" y="97.3" width="32.1" height="32.1" fill="none" stroke="#111" stroke-width="1"/><rect x="208.6" y="107.3" width="2" height="2" fill="#000"/><rect x="225.7" y="97.3" width="32.1" height="32.1" fill="none" stroke="#111" stroke-width="1"/><rect x="240.7" y="107.3" width="2" height="2" fill="#000"/><rect x="257.8" y="97.3" width="32.1" height="32.1" fill="none" stroke="#111" stroke-width="1"/><rect x="272.8" y="107.3" width="2" height="2" fill="#000"/><rect x="2" y="2" width="31" height="31" fill="none" stroke="#111" stroke-width="2"/></svg>
<div class="a" style="left:1012px;top:240px;width:16px;height:111px;background:#f4f4f6"></div>
<div class="a" style="left:1012px;top:240px;width:16px;height:17px;background:linear-gradient(90deg,#d8e4f0,#f0f0f4 50%,#c4c4c8);border:1px solid #c0c0c0"></div>
<div class="a" style="left:1012px;top:257px;width:16px;height:34px;background:linear-gradient(90deg,#d8e4f0,#f0f0f4 50%,#c4c4c8);border:1px solid #c0c0c0"></div>
<svg class="a" style="left:1016px;top:270px;" width="8" height="6" viewBox="0 0 8 6"><path d="M0,0.5h8M0,2.5h8M0,4.5h8" stroke="#666"/></svg>
<div class="a" style="left:1012px;top:335px;width:16px;height:16px;background:linear-gradient(90deg,#d8e4f0,#f0f0f4 50%,#c4c4c8);border:1px solid #c0c0c0"></div>
<div class="t" style="left:712px;top:361px;font-size:10.5px;">Диаметр</div>
<div class="inp" style="left:978px;top:359.7px;width:51px;height:15.5px;border-color:#bdbdbd"></div>
<div class="t" style="left:983px;top:363.5px;font-size:10px;">1 пикс.</div>
<div class="a" style="left:712px;top:385.5px;width:316px;height:3px;background:#c6c6c6;border:1px solid #a8a8a8;border-radius:2px"></div>
<svg class="a" style="left:709px;top:380px;" width="9" height="13" viewBox="0 0 9 13"><path d="M1,12 V4 C1,0 8,0 8,4 V12Z" fill="#f0f0f0" stroke="#8a8a8a"/></svg>
<div class="cb" style="left:712px;top:401px"></div>
<div class="t" style="left:726px;top:401.5px;font-size:10.5px;">Отразить X</div>
<div class="cb" style="left:785px;top:401px"></div>
<div class="t" style="left:798px;top:401.5px;font-size:10.5px;">Отразить Y</div>
<div class="t" style="left:775px;top:432px;font-size:10.5px;">Угол:</div>
<div class="inp" style="left:806px;top:429px;width:46px;height:15px;border-color:#aaa"></div>
<div class="t" style="left:810.5px;top:432.5px;font-size:10px;">0°</div>
<div class="t" style="left:766px;top:455.5px;font-size:10.5px;">Форма:</div>
<div class="inp" style="left:806px;top:453.7px;width:46px;height:14.5px;border-color:#aaa"></div>
<div class="t" style="left:810.5px;top:457px;font-size:10px;">100%</div>
<svg class="a" style="left:871.7px;top:396px;" width="76" height="77" viewBox="0 0 76 77"><rect x="0.5" y="0.5" width="75" height="76" fill="#fff" stroke="#111" stroke-dasharray="1,1.5"/><circle cx="38" cy="38.5" r="25" fill="none" stroke="#111" stroke-width="1.2"/><path d="M38,10 V67 M10,38.5 H73 M67,34 L73,38.5 L67,43" fill="none" stroke="#111" stroke-width="1.2"/><circle cx="38" cy="13.5" r="2" fill="#111"/><circle cx="38" cy="63.5" r="2" fill="#111"/></svg>
<div class="t" style="left:712px;top:478.5px;font-size:10.5px;">Жесткость</div>
<div class="inp" style="left:983px;top:477.7px;width:46px;height:14.5px;border-color:#aaa"></div>
<div class="t" style="left:987px;top:481px;font-size:10px;">100%</div>
<div class="a" style="left:712px;top:501.5px;width:316px;height:3px;background:#c6c6c6;border:1px solid #a8a8a8;border-radius:2px"></div>
<svg class="a" style="left:1023px;top:496px;" width="9" height="13" viewBox="0 0 9 13"><path d="M1,12 V4 C1,0 8,0 8,4 V12Z" fill="#f0f0f0" stroke="#8a8a8a"/></svg>
<div class="cb" style="left:712px;top:513.5px"></div>
<svg class="a" style="left:713px;top:514.5px;" width="9" height="9" viewBox="0 0 9 9"><path d="M1,4 L3.5,7.5 L8,0.5" fill="none" stroke="#2b3fa8" stroke-width="1.6"/></svg>
<div class="t" style="left:726px;top:514px;font-size:10.5px;">Интервалы</div>
<div class="inp" style="left:983px;top:513px;width:46px;height:14.5px;border-color:#aaa"></div>
<div class="t" style="left:987px;top:516.5px;font-size:10px;">33%</div>
<div class="a" style="left:712px;top:536.5px;width:316px;height:3px;background:#c6c6c6;border:1px solid #a8a8a8;border-radius:2px"></div>
<svg class="a" style="left:759px;top:531px;" width="9" height="13" viewBox="0 0 9 13"><path d="M1,12 V4 C1,0 8,0 8,4 V12Z" fill="#cfe4f8" stroke="#7a96b0"/></svg>
<div class="a" style="left:566px;top:547px;width:464px;height:1px;background:#bcbcbc"></div>
<div class="a" style="left:566px;top:553px;width:464px;height:84px;background:#fff;border:1px solid #c8c8c8"></div>
<svg class="a" style="left:566px;top:553px;" width="464" height="84" viewBox="0 0 464 84"><path d="M27.4,42.2 C60,34 95,29.5 126.4,29.5 C190,29.5 250,53.2 319.3,53.2 C365,53.2 400,47 435.8,42.2" fill="none" stroke="#111" stroke-width="1.3"/></svg>
<div class="a" style="left:761px;top:554.6px;width:218px;height:17.4px;background:#ffffe1;border:1px solid #111"></div>
<div class="t" style="left:765px;top:557.5px;font-size:11px;">Задайте интервалы при движении кисти</div>
<div class="a" style="left:566px;top:643px;width:464px;height:1px;background:#bdbdbd"></div>
<svg class="a" style="left:974px;top:645px;" width="11" height="11" viewBox="0 0 11 11"><rect x="0.5" y="2.5" width="8" height="8" fill="#fff" stroke="#111"/><rect x="3" y="5" width="4" height="4" fill="#111"/></svg>
<svg class="a" style="left:1003px;top:644px;" width="10" height="12" viewBox="0 0 10 12"><path d="M1,3h8M3,3v-2h4v2M2,4h6v7h-6z" fill="#eee" stroke="#777"/></svg>
<svg class="a" style="left:1027px;top:650px;" width="9" height="9" viewBox="0 0 9 9"><path d="M8,1h1M6,3h1M8,3h1M4,5h1M6,5h1M8,5h1M2,7h1M4,7h1M6,7h1M8,7h1" stroke="#999"/></svg>
</div></body></html>
